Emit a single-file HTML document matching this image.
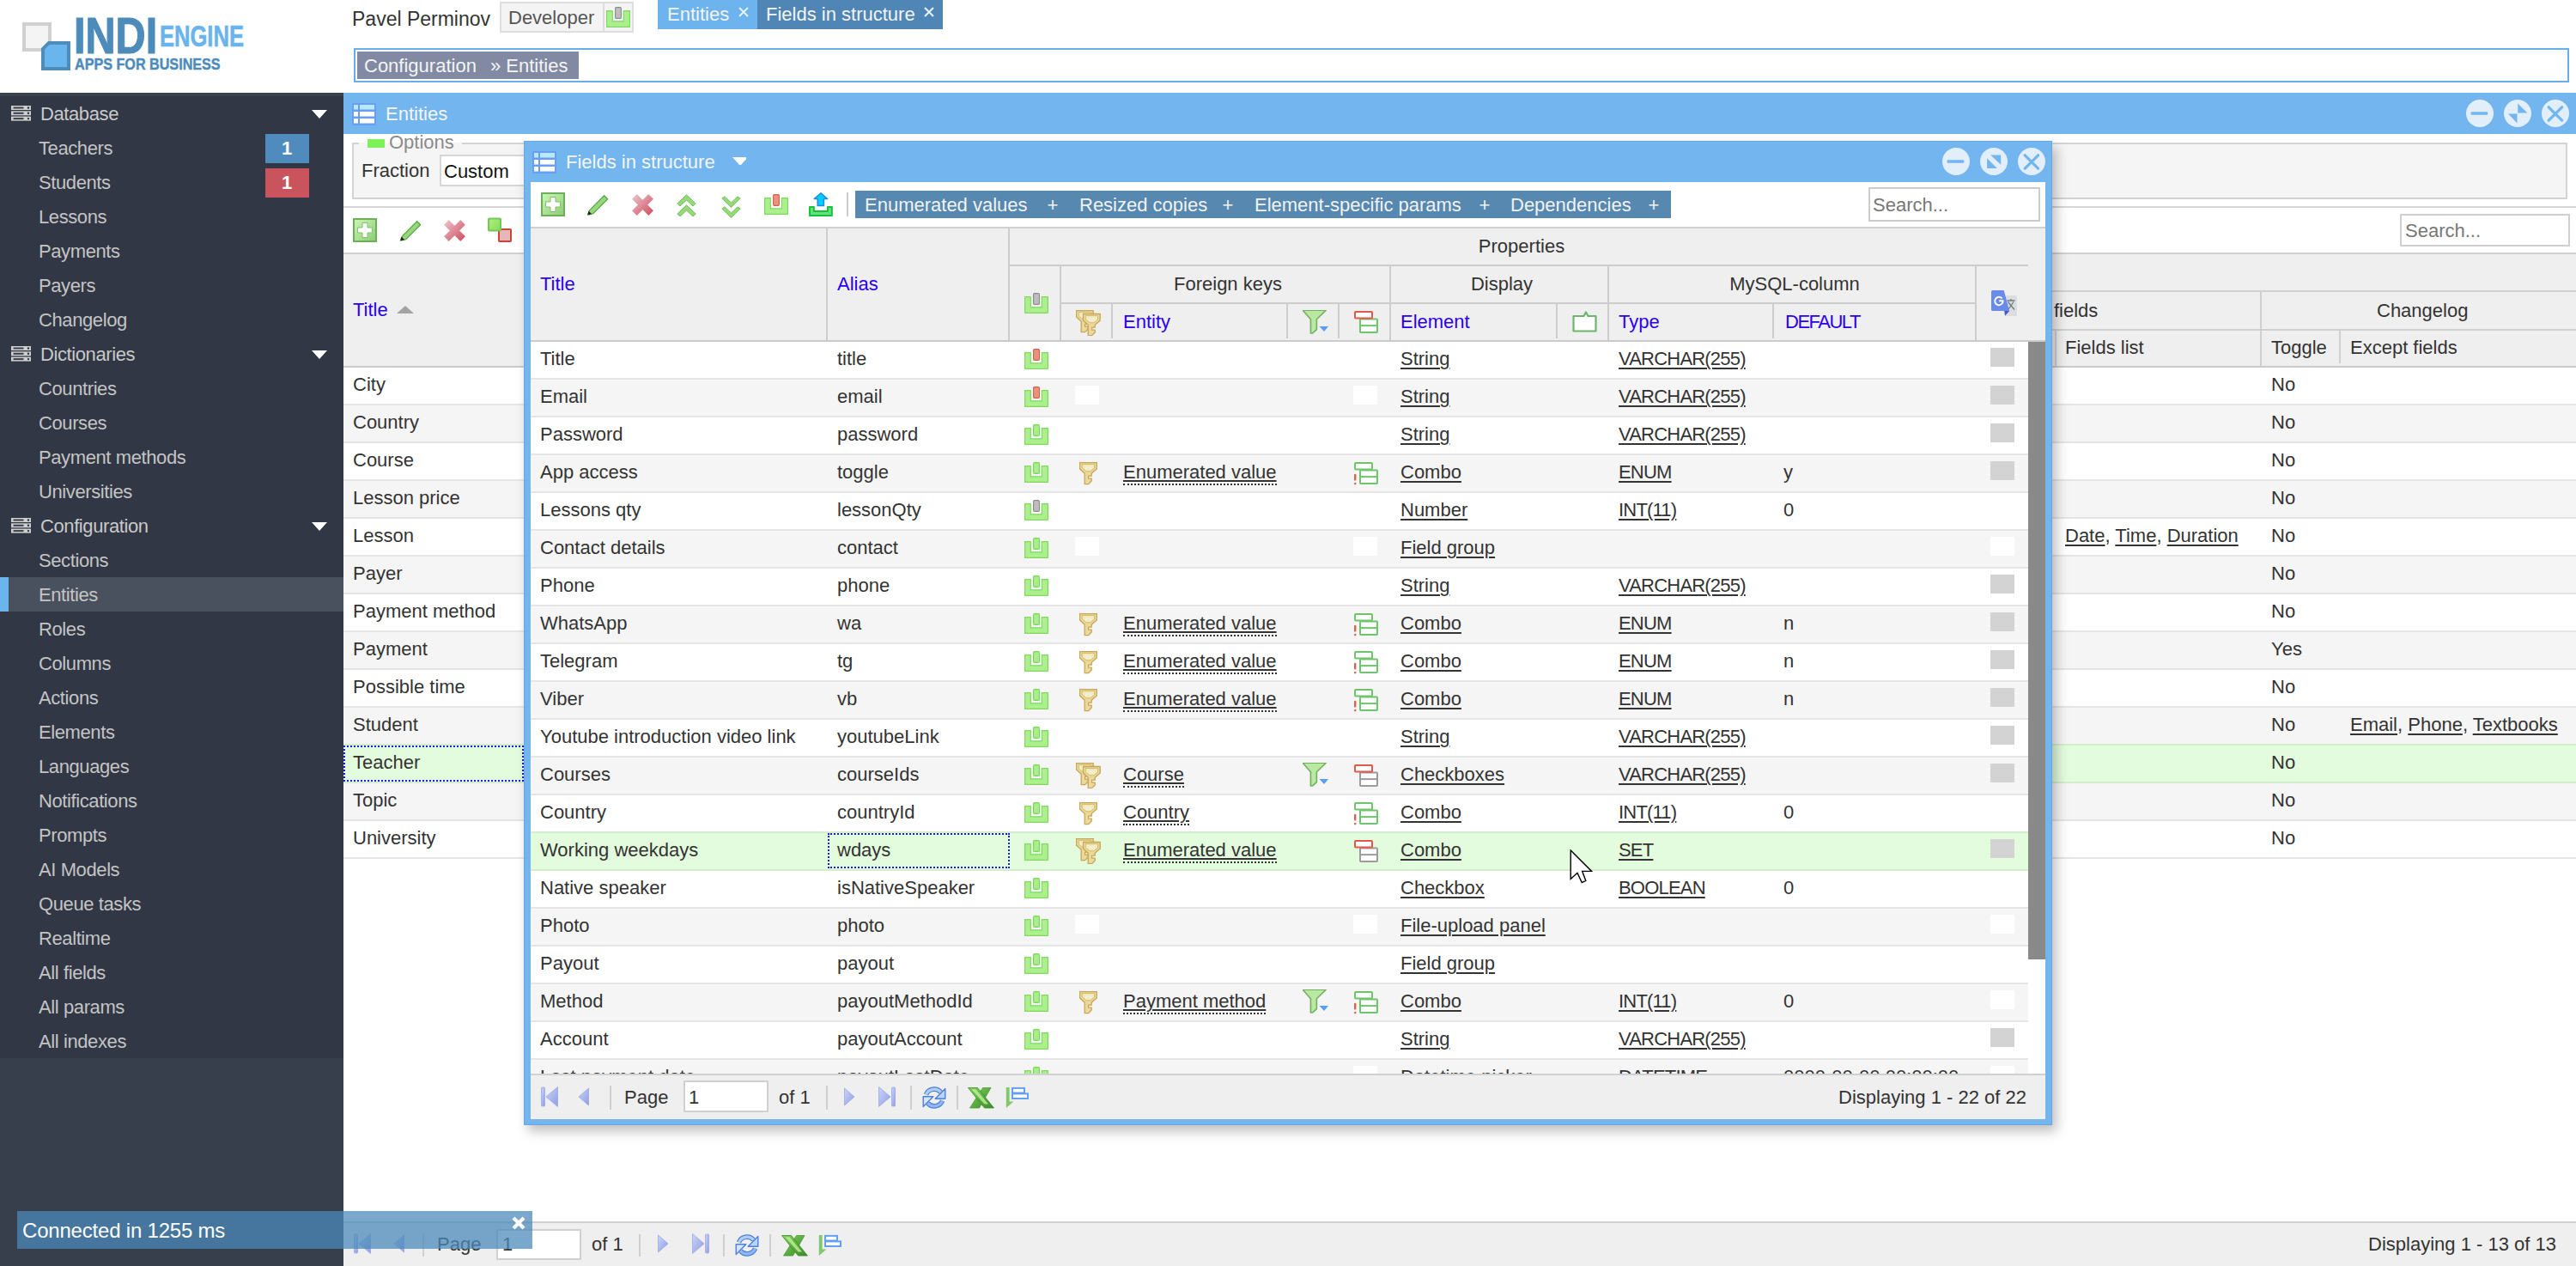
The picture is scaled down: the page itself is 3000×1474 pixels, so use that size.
<!DOCTYPE html><html><head><meta charset="utf-8"><style>
html,body{margin:0;padding:0;width:3000px;height:1474px;overflow:hidden;background:#fff;font-family:'Liberation Sans', sans-serif;}
div{box-sizing:border-box}
u{text-decoration:underline;text-underline-offset:3px;text-decoration-thickness:2px}
</style></head><body>
<div style="position:absolute;left:26px;top:26px;width:34px;height:34px;background:#F4F4F4;border:4px solid #D0D0D0"></div><svg style="position:absolute;left:48px;top:48px" width="34" height="34" viewBox="0 0 34 34"><path d="M8 0 H34 V34 H0 V8 Z" fill="#4E8CBA"/><path d="M9.5 4 H30 V30 H4 V9.5 Z" fill="#69B5EE"/></svg><div style="position:absolute;left:86px;top:12px;font-weight:bold;font-size:60px;line-height:60px;color:#4D8BBB;-webkit-text-stroke:1.2px #4D8BBB;transform-origin:0 0;transform:scaleX(0.81)">INDI</div><div style="position:absolute;left:186px;top:24px;font-weight:bold;font-size:35px;line-height:35px;color:#69B4EC;-webkit-text-stroke:0.6px #69B4EC;transform-origin:0 0;transform:scaleX(0.73)">ENGINE</div><div style="position:absolute;left:87px;top:65px;font-weight:bold;font-size:19px;line-height:19px;color:#4D8BBB;-webkit-text-stroke:0.4px #4D8BBB;transform-origin:0 0;transform:scaleX(0.85)">APPS FOR BUSINESS</div><div style="position:absolute;left:410px;top:11px;font-size:23px;line-height:23px;color:#333;white-space:nowrap;">Pavel Perminov</div><div style="position:absolute;left:582px;top:2px;width:156px;height:36px;background:#F4F4F4;border:2px solid #DDDDDD"></div><div style="position:absolute;left:702px;top:2px;width:2px;height:36px;background:#DDDDDD"></div><div style="position:absolute;left:592px;top:10px;font-size:22px;line-height:22px;color:#555;white-space:nowrap;">Developer</div><svg style="position:absolute;left:706px;top:8px" width="28" height="24" viewBox="0 0 28 24"><path d="M0.6 4.6 H7.3 V16.8 H20.3 V4.6 H27.4 V23.3 H0.6 Z" fill="#ACEF8E" stroke="#80DA62" stroke-width="1.2" stroke-linejoin="round"/><rect x="10.6" y="0.6" width="6.8" height="12.8" rx="1.2" fill="#BEBEBE" stroke="#8C8C8C" stroke-width="1.1"/></svg><div style="position:absolute;left:766px;top:0px;width:116px;height:34px;background:#6DB3ED"></div><div style="position:absolute;left:777px;top:6px;font-size:22px;line-height:22px;color:#F4F4F4;white-space:nowrap;">Entities</div><svg style="position:absolute;left:860px;top:8px" width="12" height="12" viewBox="0 0 12 12"><path d="M1 1 L11 11 M11 1 L1 11" stroke="#E8F2FB" stroke-width="2"/></svg><div style="position:absolute;left:882px;top:0px;width:216px;height:34px;background:#4F86B5"></div><div style="position:absolute;left:892px;top:6px;font-size:22px;line-height:22px;color:#F4F4F4;white-space:nowrap;">Fields in structure</div><svg style="position:absolute;left:1076px;top:8px" width="12" height="12" viewBox="0 0 12 12"><path d="M1 1 L11 11 M11 1 L1 11" stroke="#E8F2FB" stroke-width="2"/></svg><div style="position:absolute;left:412px;top:56px;width:2580px;height:40px;border:2px solid #66AEEC;background:#fff"></div><div style="position:absolute;left:416px;top:60px;width:258px;height:32px;background:#818AA2"></div><div style="position:absolute;left:424px;top:66px;font-size:22px;line-height:22px;color:#F4F4F4;white-space:nowrap;">Configuration</div><div style="position:absolute;left:571px;top:66px;font-size:22px;line-height:22px;color:#F4F4F4;white-space:nowrap;">» Entities</div><div style="position:absolute;left:0px;top:108px;width:400px;height:1366px;background:#363F4B"></div><div style="position:absolute;left:0px;top:108px;width:400px;height:1124px;background:#313744"></div><div style="position:absolute;left:0px;top:108px;width:400px;height:4px;background:#39414D"></div><svg style="position:absolute;left:13px;top:123px" width="23" height="18" viewBox="0 0 23 18"><rect x="0" y="0" width="23" height="5" fill="#CFCFCF"/><rect x="2.5" y="1.5" width="12" height="2" fill="#3A404A"/><circle cx="20" cy="2.5" r="1.2" fill="#2A3040"/><rect x="0" y="6.3" width="23" height="5" fill="#CFCFCF"/><rect x="2.5" y="7.8" width="12" height="2" fill="#3A404A"/><circle cx="20" cy="8.8" r="1.2" fill="#2A3040"/><rect x="0" y="12.6" width="23" height="5" fill="#CFCFCF"/><rect x="2.5" y="14.1" width="12" height="2" fill="#3A404A"/><circle cx="20" cy="15.1" r="1.2" fill="#2A3040"/></svg><div style="position:absolute;left:47px;top:122px;font-size:22px;line-height:22px;color:#C9C9C9;white-space:nowrap;letter-spacing:-0.4px">Database</div><svg style="position:absolute;left:363px;top:128px" width="18" height="10" viewBox="0 0 18 10"><path d="M0 0 H18 L9 10 Z" fill="#fff"/></svg><div style="position:absolute;left:45px;top:162px;font-size:22px;line-height:22px;color:#C4C4C4;white-space:nowrap;letter-spacing:-0.4px">Teachers</div><div style="position:absolute;left:45px;top:202px;font-size:22px;line-height:22px;color:#C4C4C4;white-space:nowrap;letter-spacing:-0.4px">Students</div><div style="position:absolute;left:45px;top:242px;font-size:22px;line-height:22px;color:#C4C4C4;white-space:nowrap;letter-spacing:-0.4px">Lessons</div><div style="position:absolute;left:45px;top:282px;font-size:22px;line-height:22px;color:#C4C4C4;white-space:nowrap;letter-spacing:-0.4px">Payments</div><div style="position:absolute;left:45px;top:322px;font-size:22px;line-height:22px;color:#C4C4C4;white-space:nowrap;letter-spacing:-0.4px">Payers</div><div style="position:absolute;left:45px;top:362px;font-size:22px;line-height:22px;color:#C4C4C4;white-space:nowrap;letter-spacing:-0.4px">Changelog</div><svg style="position:absolute;left:13px;top:403px" width="23" height="18" viewBox="0 0 23 18"><rect x="0" y="0" width="23" height="5" fill="#CFCFCF"/><rect x="2.5" y="1.5" width="12" height="2" fill="#3A404A"/><circle cx="20" cy="2.5" r="1.2" fill="#2A3040"/><rect x="0" y="6.3" width="23" height="5" fill="#CFCFCF"/><rect x="2.5" y="7.8" width="12" height="2" fill="#3A404A"/><circle cx="20" cy="8.8" r="1.2" fill="#2A3040"/><rect x="0" y="12.6" width="23" height="5" fill="#CFCFCF"/><rect x="2.5" y="14.1" width="12" height="2" fill="#3A404A"/><circle cx="20" cy="15.1" r="1.2" fill="#2A3040"/></svg><div style="position:absolute;left:47px;top:402px;font-size:22px;line-height:22px;color:#C9C9C9;white-space:nowrap;letter-spacing:-0.4px">Dictionaries</div><svg style="position:absolute;left:363px;top:408px" width="18" height="10" viewBox="0 0 18 10"><path d="M0 0 H18 L9 10 Z" fill="#fff"/></svg><div style="position:absolute;left:45px;top:442px;font-size:22px;line-height:22px;color:#C4C4C4;white-space:nowrap;letter-spacing:-0.4px">Countries</div><div style="position:absolute;left:45px;top:482px;font-size:22px;line-height:22px;color:#C4C4C4;white-space:nowrap;letter-spacing:-0.4px">Courses</div><div style="position:absolute;left:45px;top:522px;font-size:22px;line-height:22px;color:#C4C4C4;white-space:nowrap;letter-spacing:-0.4px">Payment methods</div><div style="position:absolute;left:45px;top:562px;font-size:22px;line-height:22px;color:#C4C4C4;white-space:nowrap;letter-spacing:-0.4px">Universities</div><svg style="position:absolute;left:13px;top:603px" width="23" height="18" viewBox="0 0 23 18"><rect x="0" y="0" width="23" height="5" fill="#CFCFCF"/><rect x="2.5" y="1.5" width="12" height="2" fill="#3A404A"/><circle cx="20" cy="2.5" r="1.2" fill="#2A3040"/><rect x="0" y="6.3" width="23" height="5" fill="#CFCFCF"/><rect x="2.5" y="7.8" width="12" height="2" fill="#3A404A"/><circle cx="20" cy="8.8" r="1.2" fill="#2A3040"/><rect x="0" y="12.6" width="23" height="5" fill="#CFCFCF"/><rect x="2.5" y="14.1" width="12" height="2" fill="#3A404A"/><circle cx="20" cy="15.1" r="1.2" fill="#2A3040"/></svg><div style="position:absolute;left:47px;top:602px;font-size:22px;line-height:22px;color:#C9C9C9;white-space:nowrap;letter-spacing:-0.4px">Configuration</div><svg style="position:absolute;left:363px;top:608px" width="18" height="10" viewBox="0 0 18 10"><path d="M0 0 H18 L9 10 Z" fill="#fff"/></svg><div style="position:absolute;left:45px;top:642px;font-size:22px;line-height:22px;color:#C4C4C4;white-space:nowrap;letter-spacing:-0.4px">Sections</div><div style="position:absolute;left:0px;top:672px;width:400px;height:40px;background:#4A515E"></div><div style="position:absolute;left:0px;top:672px;width:10px;height:40px;background:#6CB4EE"></div><div style="position:absolute;left:45px;top:682px;font-size:22px;line-height:22px;color:#C4C4C4;white-space:nowrap;letter-spacing:-0.4px">Entities</div><div style="position:absolute;left:45px;top:722px;font-size:22px;line-height:22px;color:#C4C4C4;white-space:nowrap;letter-spacing:-0.4px">Roles</div><div style="position:absolute;left:45px;top:762px;font-size:22px;line-height:22px;color:#C4C4C4;white-space:nowrap;letter-spacing:-0.4px">Columns</div><div style="position:absolute;left:45px;top:802px;font-size:22px;line-height:22px;color:#C4C4C4;white-space:nowrap;letter-spacing:-0.4px">Actions</div><div style="position:absolute;left:45px;top:842px;font-size:22px;line-height:22px;color:#C4C4C4;white-space:nowrap;letter-spacing:-0.4px">Elements</div><div style="position:absolute;left:45px;top:882px;font-size:22px;line-height:22px;color:#C4C4C4;white-space:nowrap;letter-spacing:-0.4px">Languages</div><div style="position:absolute;left:45px;top:922px;font-size:22px;line-height:22px;color:#C4C4C4;white-space:nowrap;letter-spacing:-0.4px">Notifications</div><div style="position:absolute;left:45px;top:962px;font-size:22px;line-height:22px;color:#C4C4C4;white-space:nowrap;letter-spacing:-0.4px">Prompts</div><div style="position:absolute;left:45px;top:1002px;font-size:22px;line-height:22px;color:#C4C4C4;white-space:nowrap;letter-spacing:-0.4px">AI Models</div><div style="position:absolute;left:45px;top:1042px;font-size:22px;line-height:22px;color:#C4C4C4;white-space:nowrap;letter-spacing:-0.4px">Queue tasks</div><div style="position:absolute;left:45px;top:1082px;font-size:22px;line-height:22px;color:#C4C4C4;white-space:nowrap;letter-spacing:-0.4px">Realtime</div><div style="position:absolute;left:45px;top:1122px;font-size:22px;line-height:22px;color:#C4C4C4;white-space:nowrap;letter-spacing:-0.4px">All fields</div><div style="position:absolute;left:45px;top:1162px;font-size:22px;line-height:22px;color:#C4C4C4;white-space:nowrap;letter-spacing:-0.4px">All params</div><div style="position:absolute;left:45px;top:1202px;font-size:22px;line-height:22px;color:#C4C4C4;white-space:nowrap;letter-spacing:-0.4px">All indexes</div><div style="position:absolute;left:309px;top:156px;width:51px;height:34px;background:#4F8BBD"></div><div style="position:absolute;left:328px;top:162px;font-size:22px;line-height:22px;color:#fff;white-space:nowrap;font-weight:bold">1</div><div style="position:absolute;left:309px;top:196px;width:51px;height:34px;background:#C9545E"></div><div style="position:absolute;left:328px;top:202px;font-size:22px;line-height:22px;color:#fff;white-space:nowrap;font-weight:bold">1</div><div style="position:absolute;left:400px;top:108px;width:2600px;height:48px;background:#72B5EF"></div><svg style="position:absolute;left:410px;top:120px" width="28" height="26" viewBox="0 0 28 26"><rect x="0" y="0" width="28" height="26" rx="1.5" fill="#6A9DF4"/><rect x="2" y="2" width="5" height="5.5" fill="#B6EAFB"/><rect x="9" y="2" width="17" height="5.5" fill="#B6EAFB"/><rect x="2" y="10" width="5" height="5.5" fill="#fff"/><rect x="9" y="10" width="17" height="5.5" fill="#fff"/><rect x="2" y="18" width="5" height="5.5" fill="#fff"/><rect x="9" y="18" width="17" height="5.5" fill="#fff"/></svg><div style="position:absolute;left:449px;top:122px;font-size:22px;line-height:22px;color:#F5F5F5;white-space:nowrap;">Entities</div><svg style="position:absolute;left:2872px;top:116px" width="32" height="32" viewBox="0 0 32 32"><circle cx="16" cy="16" r="16" fill="#E2EFFB"/><rect x="5.6" y="14.2" width="19.6" height="3.6" rx="1" fill="#72B5EF"/></svg><svg style="position:absolute;left:2916px;top:116px" width="32" height="32" viewBox="0 0 32 32"><circle cx="16" cy="16" r="16" fill="#E2EFFB"/><path d="M16.3 4.6 V15.5 H27.4 Z M5.1 16.5 H15.5 V27.4 Z" fill="#72B5EF"/></svg><svg style="position:absolute;left:2960px;top:116px" width="32" height="32" viewBox="0 0 32 32"><circle cx="16" cy="16" r="16" fill="#E2EFFB"/><path d="M8.2 8.8 L23.6 24.1 M23.6 8.8 L8.2 24.1" stroke="#72B5EF" stroke-width="3.3" stroke-linecap="round"/></svg><div style="position:absolute;left:410px;top:166px;width:2580px;height:66px;background:#F5F5F5;border:2px solid #D3D3D3"></div><div style="position:absolute;left:418px;top:166px;width:120px;height:2px;background:#F5F5F5"></div><div style="position:absolute;left:428px;top:162px;width:20px;height:10px;background:#7EF15A"></div><div style="position:absolute;left:453px;top:155px;font-size:22px;line-height:22px;color:#8A8A8A;white-space:nowrap;">Options</div><div style="position:absolute;left:421px;top:188px;font-size:22px;line-height:22px;color:#333;white-space:nowrap;">Fraction</div><div style="position:absolute;left:512px;top:180px;width:200px;height:37px;background:#fff;border:2px solid #D6D6D6"></div><div style="position:absolute;left:517px;top:189px;font-size:22px;line-height:22px;color:#111;white-space:nowrap;">Custom</div><div style="position:absolute;left:400px;top:240px;width:2600px;height:2px;background:#D6D6D6"></div><svg style="position:absolute;left:411px;top:254px" width="28" height="28" viewBox="0 0 28 28"><defs><linearGradient id="gadd" x1="0" y1="0" x2="1" y2="1"><stop offset="0" stop-color="#CDF7B8"/><stop offset="1" stop-color="#8CCB74"/></linearGradient></defs><rect x="1" y="1" width="26" height="26" fill="url(#gadd)" stroke="#6CAF58" stroke-width="2"/><path d="M11 5.5 H17 V11 H22.5 V17 H17 V22.5 H11 V17 H5.5 V11 H11 Z" fill="#fff" stroke="#82C06C" stroke-width="1"/></svg><svg style="position:absolute;left:465px;top:255px" width="26" height="26" viewBox="0 0 26 26"><path d="M3.8 19.6 L20.6 2.8 L24.6 6.8 L7.8 23.6 L1.6 25 Z" fill="#93D97A" stroke="#5FA54A" stroke-width="1.3" stroke-linejoin="round"/><path d="M1.3 25.3 L2.4 20.6 L6.2 24.3 Z" fill="#222"/></svg><svg style="position:absolute;left:517px;top:256px" width="25" height="25" viewBox="0 0 25 25"><defs><linearGradient id="gdel" gradientUnits="userSpaceOnUse" x1="0" y1="0" x2="25" y2="25"><stop offset="0" stop-color="#EDC8CF"/><stop offset="1" stop-color="#CC4A5C"/></linearGradient></defs><path d="M2.9 2.9 L22.1 22.1 M22.1 2.9 L2.9 22.1" stroke="url(#gdel)" stroke-width="8" stroke-linecap="butt"/></svg><svg style="position:absolute;left:567px;top:252px" width="30" height="30" viewBox="0 0 30 30"><rect x="14" y="15" width="14" height="14" rx="0.8" fill="#E6B6B9" stroke="#CC4434" stroke-width="2"/><defs><linearGradient id="gcp" x1="0" y1="0" x2="1" y2="1"><stop offset="0" stop-color="#ADF07F"/><stop offset="1" stop-color="#88DC58"/></linearGradient></defs><rect x="2" y="2.5" width="14" height="14" rx="0.8" fill="url(#gcp)" stroke="#7AC35C" stroke-width="2"/></svg><div style="position:absolute;left:2795px;top:249px;width:198px;height:38px;background:#fff;border:2px solid #CFCFCF"></div><div style="position:absolute;left:2801px;top:258px;font-size:22px;line-height:22px;color:#777;white-space:nowrap;">Search...</div><div style="position:absolute;left:400px;top:294px;width:2600px;height:2px;background:#D0D0D0"></div><div style="position:absolute;left:400px;top:296px;width:2600px;height:130px;background:#EFEFEF"></div><div style="position:absolute;left:400px;top:426px;width:2600px;height:2px;background:#CBCBCB"></div><div style="position:absolute;left:411px;top:350px;font-size:22px;line-height:22px;color:#2B00F0;white-space:nowrap;">Title</div><svg style="position:absolute;left:462px;top:356px" width="20" height="9" viewBox="0 0 20 9"><path d="M0 9 L10 0 L20 9 Z" fill="#A3A3A3"/></svg><div style="position:absolute;left:2390px;top:338px;width:610px;height:2px;background:#D0D0D0"></div><div style="position:absolute;left:2390px;top:383px;width:610px;height:2px;background:#D0D0D0"></div><div style="position:absolute;left:2632px;top:339px;width:2px;height:88px;background:#D0D0D0"></div><div style="position:absolute;left:2393px;top:384px;width:2px;height:42px;background:#D0D0D0"></div><div style="position:absolute;left:2724px;top:385px;width:2px;height:38px;background:#D0D0D0"></div><div style="position:absolute;left:2392px;top:351px;font-size:22px;line-height:22px;color:#333;white-space:nowrap;">fields</div><div style="position:absolute;left:2768px;top:351px;font-size:22px;line-height:22px;color:#333;white-space:nowrap;">Changelog</div><div style="position:absolute;left:2405px;top:394px;font-size:22px;line-height:22px;color:#333;white-space:nowrap;">Fields list</div><div style="position:absolute;left:2645px;top:394px;font-size:22px;line-height:22px;color:#333;white-space:nowrap;">Toggle</div><div style="position:absolute;left:2737px;top:394px;font-size:22px;line-height:22px;color:#333;white-space:nowrap;">Except fields</div><div style="position:absolute;left:400px;top:428px;width:2600px;height:42px;background:#fff"></div><div style="position:absolute;left:400px;top:470px;width:2600px;height:2px;background:#E5E5E5"></div><div style="position:absolute;left:411px;top:437px;font-size:22px;line-height:22px;color:#333;white-space:nowrap;">City</div><div style="position:absolute;left:2645px;top:437px;font-size:22px;line-height:22px;color:#333;white-space:nowrap;">No</div><div style="position:absolute;left:400px;top:472px;width:2600px;height:42px;background:#F5F5F5"></div><div style="position:absolute;left:400px;top:514px;width:2600px;height:2px;background:#E5E5E5"></div><div style="position:absolute;left:411px;top:481px;font-size:22px;line-height:22px;color:#333;white-space:nowrap;">Country</div><div style="position:absolute;left:2645px;top:481px;font-size:22px;line-height:22px;color:#333;white-space:nowrap;">No</div><div style="position:absolute;left:400px;top:516px;width:2600px;height:42px;background:#fff"></div><div style="position:absolute;left:400px;top:558px;width:2600px;height:2px;background:#E5E5E5"></div><div style="position:absolute;left:411px;top:525px;font-size:22px;line-height:22px;color:#333;white-space:nowrap;">Course</div><div style="position:absolute;left:2645px;top:525px;font-size:22px;line-height:22px;color:#333;white-space:nowrap;">No</div><div style="position:absolute;left:400px;top:560px;width:2600px;height:42px;background:#F5F5F5"></div><div style="position:absolute;left:400px;top:602px;width:2600px;height:2px;background:#E5E5E5"></div><div style="position:absolute;left:411px;top:569px;font-size:22px;line-height:22px;color:#333;white-space:nowrap;">Lesson price</div><div style="position:absolute;left:2645px;top:569px;font-size:22px;line-height:22px;color:#333;white-space:nowrap;">No</div><div style="position:absolute;left:400px;top:604px;width:2600px;height:42px;background:#fff"></div><div style="position:absolute;left:400px;top:646px;width:2600px;height:2px;background:#E5E5E5"></div><div style="position:absolute;left:411px;top:613px;font-size:22px;line-height:22px;color:#333;white-space:nowrap;">Lesson</div><div style="position:absolute;left:2645px;top:613px;font-size:22px;line-height:22px;color:#333;white-space:nowrap;">No</div><div style="position:absolute;left:2405px;top:613px;font-size:22px;line-height:22px;color:#333;white-space:nowrap;"><u>Date</u>, <u>Time</u>, <u>Duration</u></div><div style="position:absolute;left:400px;top:648px;width:2600px;height:42px;background:#F5F5F5"></div><div style="position:absolute;left:400px;top:690px;width:2600px;height:2px;background:#E5E5E5"></div><div style="position:absolute;left:411px;top:657px;font-size:22px;line-height:22px;color:#333;white-space:nowrap;">Payer</div><div style="position:absolute;left:2645px;top:657px;font-size:22px;line-height:22px;color:#333;white-space:nowrap;">No</div><div style="position:absolute;left:400px;top:692px;width:2600px;height:42px;background:#fff"></div><div style="position:absolute;left:400px;top:734px;width:2600px;height:2px;background:#E5E5E5"></div><div style="position:absolute;left:411px;top:701px;font-size:22px;line-height:22px;color:#333;white-space:nowrap;">Payment method</div><div style="position:absolute;left:2645px;top:701px;font-size:22px;line-height:22px;color:#333;white-space:nowrap;">No</div><div style="position:absolute;left:400px;top:736px;width:2600px;height:42px;background:#F5F5F5"></div><div style="position:absolute;left:400px;top:778px;width:2600px;height:2px;background:#E5E5E5"></div><div style="position:absolute;left:411px;top:745px;font-size:22px;line-height:22px;color:#333;white-space:nowrap;">Payment</div><div style="position:absolute;left:2645px;top:745px;font-size:22px;line-height:22px;color:#333;white-space:nowrap;">Yes</div><div style="position:absolute;left:400px;top:780px;width:2600px;height:42px;background:#fff"></div><div style="position:absolute;left:400px;top:822px;width:2600px;height:2px;background:#E5E5E5"></div><div style="position:absolute;left:411px;top:789px;font-size:22px;line-height:22px;color:#333;white-space:nowrap;">Possible time</div><div style="position:absolute;left:2645px;top:789px;font-size:22px;line-height:22px;color:#333;white-space:nowrap;">No</div><div style="position:absolute;left:400px;top:824px;width:2600px;height:42px;background:#F5F5F5"></div><div style="position:absolute;left:400px;top:866px;width:2600px;height:2px;background:#D4EDCD"></div><div style="position:absolute;left:411px;top:833px;font-size:22px;line-height:22px;color:#333;white-space:nowrap;">Student</div><div style="position:absolute;left:2645px;top:833px;font-size:22px;line-height:22px;color:#333;white-space:nowrap;">No</div><div style="position:absolute;left:2737px;top:833px;font-size:22px;line-height:22px;color:#333;white-space:nowrap;"><u>Email</u>, <u>Phone</u>, <u>Textbooks</u></div><div style="position:absolute;left:400px;top:868px;width:2600px;height:42px;background:#E3FCDD"></div><div style="position:absolute;left:400px;top:910px;width:2600px;height:2px;background:#D4EDCD"></div><div style="position:absolute;left:411px;top:877px;font-size:22px;line-height:22px;color:#333;white-space:nowrap;">Teacher</div><div style="position:absolute;left:2645px;top:877px;font-size:22px;line-height:22px;color:#333;white-space:nowrap;">No</div><div style="position:absolute;left:400px;top:868px;width:210px;height:42px;border:2px dotted #1A1AE0"></div><div style="position:absolute;left:400px;top:912px;width:2600px;height:42px;background:#F5F5F5"></div><div style="position:absolute;left:400px;top:954px;width:2600px;height:2px;background:#E5E5E5"></div><div style="position:absolute;left:411px;top:921px;font-size:22px;line-height:22px;color:#333;white-space:nowrap;">Topic</div><div style="position:absolute;left:2645px;top:921px;font-size:22px;line-height:22px;color:#333;white-space:nowrap;">No</div><div style="position:absolute;left:400px;top:956px;width:2600px;height:42px;background:#fff"></div><div style="position:absolute;left:400px;top:998px;width:2600px;height:2px;background:#E5E5E5"></div><div style="position:absolute;left:411px;top:965px;font-size:22px;line-height:22px;color:#333;white-space:nowrap;">University</div><div style="position:absolute;left:2645px;top:965px;font-size:22px;line-height:22px;color:#333;white-space:nowrap;">No</div><div style="position:absolute;left:400px;top:1422px;width:2600px;height:52px;background:#EFEFEF;border-top:2px solid #D0D0D0"></div><svg style="position:absolute;left:412px;top:1436px" width="20" height="24" viewBox="0 0 20 24"><defs><linearGradient id="gpg" x1="0" y1="0" x2="1" y2="1"><stop offset="0" stop-color="#CCD5F7"/><stop offset="1" stop-color="#8D9CE6"/></linearGradient></defs><rect x="0.5" y="1" width="4" height="22" rx="1" fill="url(#gpg)" stroke="#9AA8E6" stroke-width="0.8"/><path d="M19.5 0.5 V23.5 L6 12 Z" fill="url(#gpg)" stroke="#9AA8E6" stroke-width="0.8"/></svg><svg style="position:absolute;left:458px;top:1436px" width="13" height="24" viewBox="0 0 13 24"><defs><linearGradient id="gpg" x1="0" y1="0" x2="1" y2="1"><stop offset="0" stop-color="#CCD5F7"/><stop offset="1" stop-color="#8D9CE6"/></linearGradient></defs><path d="M12.5 2 V22 L1 12 Z" fill="url(#gpg)" stroke="#9AA8E6" stroke-width="0.8"/></svg><div style="position:absolute;left:492px;top:1437px;width:2px;height:26px;background:#CFCFCF"></div><div style="position:absolute;left:509px;top:1438px;font-size:22px;line-height:22px;color:#333;white-space:nowrap;">Page</div><div style="position:absolute;left:578px;top:1431px;width:99px;height:36px;background:#fff;border:2px solid #D0D0D0"></div><div style="position:absolute;left:585px;top:1438px;font-size:22px;line-height:22px;color:#333;white-space:nowrap;">1</div><div style="position:absolute;left:689px;top:1438px;font-size:22px;line-height:22px;color:#333;white-space:nowrap;">of 1</div><div style="position:absolute;left:744px;top:1437px;width:2px;height:26px;background:#CFCFCF"></div><svg style="position:absolute;left:766px;top:1436px" width="13" height="24" viewBox="0 0 13 24"><defs><linearGradient id="gpg" x1="0" y1="0" x2="1" y2="1"><stop offset="0" stop-color="#CCD5F7"/><stop offset="1" stop-color="#8D9CE6"/></linearGradient></defs><path d="M0.5 2 V22 L12 12 Z" fill="url(#gpg)" stroke="#9AA8E6" stroke-width="0.8"/></svg><svg style="position:absolute;left:806px;top:1436px" width="20" height="24" viewBox="0 0 20 24"><defs><linearGradient id="gpg" x1="0" y1="0" x2="1" y2="1"><stop offset="0" stop-color="#CCD5F7"/><stop offset="1" stop-color="#8D9CE6"/></linearGradient></defs><path d="M0.5 0.5 V23.5 L14 12 Z" fill="url(#gpg)" stroke="#9AA8E6" stroke-width="0.8"/><rect x="15.5" y="1" width="4" height="22" rx="1" fill="url(#gpg)" stroke="#9AA8E6" stroke-width="0.8"/></svg><div style="position:absolute;left:842px;top:1437px;width:2px;height:26px;background:#CFCFCF"></div><svg style="position:absolute;left:856px;top:1436px" width="29" height="29" viewBox="0 0 29 29"><path d="M4.5 10.5 A10 9.5 0 0 1 21.5 7.5" fill="none" stroke="#4E80DA" stroke-width="5.6"/><path d="M4.5 10.5 A10 9.5 0 0 1 21.5 7.5" fill="none" stroke="#AFCFF7" stroke-width="3.2"/><path d="M26.8 3.6 V15.3 H15.2 Z" fill="#B7D5F8" stroke="#4E80DA" stroke-width="1.4" stroke-linejoin="round"/><path d="M23.5 17.5 A10 9.5 0 0 1 6.5 20.5" fill="none" stroke="#4E80DA" stroke-width="5.6"/><path d="M23.5 17.5 A10 9.5 0 0 1 6.5 20.5" fill="none" stroke="#8FB8F5" stroke-width="3.2"/><path d="M1.2 12.7 H12.8 L1.2 24.4 Z" fill="#D3E5FB" stroke="#4E80DA" stroke-width="1.4" stroke-linejoin="round"/></svg><div style="position:absolute;left:896px;top:1437px;width:2px;height:26px;background:#CFCFCF"></div><svg style="position:absolute;left:910px;top:1438px" width="31" height="25" viewBox="0 0 31 25"><defs><linearGradient id="gxl" x1="0" y1="0" x2="1" y2="1"><stop offset="0" stop-color="#7CD45A"/><stop offset="1" stop-color="#3C8A28"/></linearGradient></defs><path d="M17.5 0.5 H27 L13.5 24 H2.5 Z" fill="url(#gxl)" stroke="#4A9A34" stroke-width="0.8"/><path d="M0.5 0.5 H11.5 L30.5 24 H19.5 Z" fill="url(#gxl)" stroke="#3E8A2C" stroke-width="0.8"/><path d="M4.5 2.2 H9.5 L24 19.5 H19.5 Z" fill="#C6F49E" opacity="0.75"/></svg><svg style="position:absolute;left:953px;top:1437px" width="28" height="26" viewBox="0 0 28 26"><path d="M0.8 1 H4.6 V17.5 H9.5 L0.8 25 Z" fill="#7FC96C"/><rect x="8" y="1.9" width="14" height="5.6" fill="#fff" stroke="#62A0F2" stroke-width="2"/><rect x="8" y="8.4" width="18" height="5.6" fill="#fff" stroke="#62A0F2" stroke-width="2"/></svg><div style="position:absolute;left:2177px;width:800px;text-align:right;top:1438px;font-size:22px;line-height:22px;color:#333;white-space:nowrap;">Displaying 1 - 13 of 13</div><div style="position:absolute;left:610px;top:164px;width:1780px;height:1146px;background:#72B5EF;border:1px solid #66A7E0;box-shadow:5px 7px 13px rgba(0,0,0,0.26)"></div><svg style="position:absolute;left:620px;top:176px" width="28" height="26" viewBox="0 0 28 26"><rect x="0" y="0" width="28" height="26" rx="1.5" fill="#6A9DF4"/><rect x="2" y="2" width="5" height="5.5" fill="#B6EAFB"/><rect x="9" y="2" width="17" height="5.5" fill="#B6EAFB"/><rect x="2" y="10" width="5" height="5.5" fill="#fff"/><rect x="9" y="10" width="17" height="5.5" fill="#fff"/><rect x="2" y="18" width="5" height="5.5" fill="#fff"/><rect x="9" y="18" width="17" height="5.5" fill="#fff"/></svg><div style="position:absolute;left:659px;top:178px;font-size:22px;line-height:22px;color:#F5F5F5;white-space:nowrap;">Fields in structure</div><svg style="position:absolute;left:853px;top:183px" width="16" height="9" viewBox="0 0 16 9"><path d="M0 0 H18 L9 10 Z" fill="#fff"/></svg><svg style="position:absolute;left:2262px;top:172px" width="32" height="32" viewBox="0 0 32 32"><circle cx="16" cy="16" r="16" fill="#E2EFFB"/><rect x="5.6" y="14.2" width="19.6" height="3.6" rx="1" fill="#72B5EF"/></svg><svg style="position:absolute;left:2306px;top:172px" width="32" height="32" viewBox="0 0 32 32"><circle cx="16" cy="16" r="16" fill="#E2EFFB"/><path d="M12.2 8.4 H24.2 V19.8 Z M8.1 12.2 V23.9 H19.8 Z" fill="#72B5EF"/></svg><svg style="position:absolute;left:2350px;top:172px" width="32" height="32" viewBox="0 0 32 32"><circle cx="16" cy="16" r="16" fill="#E2EFFB"/><path d="M8.2 8.8 L23.6 24.1 M23.6 8.8 L8.2 24.1" stroke="#72B5EF" stroke-width="3.3" stroke-linecap="round"/></svg><div style="position:absolute;left:618px;top:212px;width:1764px;height:1091px;background:#fff"></div><svg style="position:absolute;left:630px;top:224px" width="28" height="28" viewBox="0 0 28 28"><defs><linearGradient id="gadd" x1="0" y1="0" x2="1" y2="1"><stop offset="0" stop-color="#CDF7B8"/><stop offset="1" stop-color="#8CCB74"/></linearGradient></defs><rect x="1" y="1" width="26" height="26" fill="url(#gadd)" stroke="#6CAF58" stroke-width="2"/><path d="M11 5.5 H17 V11 H22.5 V17 H17 V22.5 H11 V17 H5.5 V11 H11 Z" fill="#fff" stroke="#82C06C" stroke-width="1"/></svg><svg style="position:absolute;left:683px;top:225px" width="26" height="26" viewBox="0 0 26 26"><path d="M3.8 19.6 L20.6 2.8 L24.6 6.8 L7.8 23.6 L1.6 25 Z" fill="#93D97A" stroke="#5FA54A" stroke-width="1.3" stroke-linejoin="round"/><path d="M1.3 25.3 L2.4 20.6 L6.2 24.3 Z" fill="#222"/></svg><svg style="position:absolute;left:736px;top:226px" width="25" height="25" viewBox="0 0 25 25"><defs><linearGradient id="gdel" gradientUnits="userSpaceOnUse" x1="0" y1="0" x2="25" y2="25"><stop offset="0" stop-color="#EDC8CF"/><stop offset="1" stop-color="#CC4A5C"/></linearGradient></defs><path d="M2.9 2.9 L22.1 22.1 M22.1 2.9 L2.9 22.1" stroke="url(#gdel)" stroke-width="8" stroke-linecap="butt"/></svg><svg style="position:absolute;left:788px;top:226px" width="23" height="27" viewBox="0 0 23 27"><path d="M0.8 11 L11.5 0.8 L22.2 11 L19 14 L11.5 7 L4 14 Z" fill="#93D97A" stroke="#77C15E" stroke-width="1"/><path d="M0.8 23 L11.5 12.8 L22.2 23 L19 26 L11.5 19 L4 26 Z" fill="#93D97A" stroke="#77C15E" stroke-width="1"/></svg><svg style="position:absolute;left:840px;top:228px" width="23" height="26" viewBox="0 0 23 26"><path d="M0.8 3 L4 0.8 L11.5 8 L19 0.8 L22.2 3 L11.5 13.5 Z" fill="#93D97A" stroke="#77C15E" stroke-width="1"/><path d="M0.8 15 L4 12.8 L11.5 20 L19 12.8 L22.2 15 L11.5 25.5 Z" fill="#93D97A" stroke="#77C15E" stroke-width="1"/></svg><svg style="position:absolute;left:890px;top:226px" width="28" height="24" viewBox="0 0 28 24"><path d="M0.6 4.6 H7.3 V16.8 H20.3 V4.6 H27.4 V23.3 H0.6 Z" fill="#ACEF8E" stroke="#80DA62" stroke-width="1.2" stroke-linejoin="round"/><rect x="10.6" y="0.6" width="6.8" height="12.8" rx="1.2" fill="#E9937F" stroke="#D0634E" stroke-width="1.1"/></svg><svg style="position:absolute;left:942px;top:224px" width="28" height="28" viewBox="0 0 28 28"><path d="M1 17 H5.8 V22.1 H21.9 V17 H26.8 V27 H1 Z" fill="#66E27A" stroke="#12C23A" stroke-width="2" stroke-linejoin="round"/><path d="M14 0.8 L21.6 7.6 H17.4 V15.4 H10.2 V7.6 H6.2 Z" fill="#00CCFF" stroke="#1890DC" stroke-width="1.5" stroke-linejoin="round"/></svg><div style="position:absolute;left:986px;top:224px;width:2px;height:28px;background:#CCCCCC"></div><div style="position:absolute;left:996px;top:222px;width:950px;height:32px;background:#5688B0"></div><div style="position:absolute;left:1007px;top:228px;font-size:22px;line-height:22px;color:#F2F2F2;white-space:nowrap;">Enumerated values</div><div style="position:absolute;left:1257px;top:228px;font-size:22px;line-height:22px;color:#F2F2F2;white-space:nowrap;">Resized copies</div><div style="position:absolute;left:1461px;top:228px;font-size:22px;line-height:22px;color:#F2F2F2;white-space:nowrap;">Element-specific params</div><div style="position:absolute;left:1759px;top:228px;font-size:22px;line-height:22px;color:#F2F2F2;white-space:nowrap;">Dependencies</div><div style="position:absolute;left:926px;width:600px;text-align:center;top:228px;font-size:22px;line-height:22px;color:#F2F2F2;white-space:nowrap;">+</div><div style="position:absolute;left:1130px;width:600px;text-align:center;top:228px;font-size:22px;line-height:22px;color:#F2F2F2;white-space:nowrap;">+</div><div style="position:absolute;left:1429px;width:600px;text-align:center;top:228px;font-size:22px;line-height:22px;color:#F2F2F2;white-space:nowrap;">+</div><div style="position:absolute;left:1626px;width:600px;text-align:center;top:228px;font-size:22px;line-height:22px;color:#F2F2F2;white-space:nowrap;">+</div><div style="position:absolute;left:2176px;top:218px;width:200px;height:40px;background:#fff;border:2px solid #CCCCCC"></div><div style="position:absolute;left:2181px;top:228px;font-size:22px;line-height:22px;color:#777;white-space:nowrap;">Search...</div><div style="position:absolute;left:618px;top:264px;width:1764px;height:2px;background:#D0D0D0"></div><div style="position:absolute;left:618px;top:266px;width:1764px;height:130px;background:#EFEFEF"></div><div style="position:absolute;left:618px;top:396px;width:1764px;height:2px;background:#CBCBCB"></div><div style="position:absolute;left:962px;top:266px;width:2px;height:131px;background:#CDCDCD"></div><div style="position:absolute;left:1174px;top:266px;width:2px;height:131px;background:#CDCDCD"></div><div style="position:absolute;left:1175px;top:308px;width:1187px;height:2px;background:#CDCDCD"></div><div style="position:absolute;left:1234px;top:309px;width:2px;height:88px;background:#CDCDCD"></div><div style="position:absolute;left:1618px;top:309px;width:2px;height:88px;background:#CDCDCD"></div><div style="position:absolute;left:1872px;top:309px;width:2px;height:88px;background:#CDCDCD"></div><div style="position:absolute;left:2300px;top:309px;width:2px;height:88px;background:#CDCDCD"></div><div style="position:absolute;left:1235px;top:352px;width:1066px;height:2px;background:#CDCDCD"></div><div style="position:absolute;left:1294px;top:354px;width:2px;height:40px;background:#CDCDCD"></div><div style="position:absolute;left:1498px;top:354px;width:2px;height:40px;background:#CDCDCD"></div><div style="position:absolute;left:1558px;top:354px;width:2px;height:40px;background:#CDCDCD"></div><div style="position:absolute;left:1812px;top:354px;width:2px;height:40px;background:#CDCDCD"></div><div style="position:absolute;left:2064px;top:354px;width:2px;height:40px;background:#CDCDCD"></div><div style="position:absolute;left:629px;top:320px;font-size:22px;line-height:22px;color:#2B00F0;white-space:nowrap;">Title</div><div style="position:absolute;left:975px;top:320px;font-size:22px;line-height:22px;color:#2B00F0;white-space:nowrap;">Alias</div><div style="position:absolute;left:1472px;width:600px;text-align:center;top:276px;font-size:22px;line-height:22px;color:#333;white-space:nowrap;">Properties</div><div style="position:absolute;left:1130px;width:600px;text-align:center;top:320px;font-size:22px;line-height:22px;color:#333;white-space:nowrap;">Foreign keys</div><div style="position:absolute;left:1449px;width:600px;text-align:center;top:320px;font-size:22px;line-height:22px;color:#333;white-space:nowrap;">Display</div><div style="position:absolute;left:1790px;width:600px;text-align:center;top:320px;font-size:22px;line-height:22px;color:#333;white-space:nowrap;">MySQL-column</div><div style="position:absolute;left:1308px;top:364px;font-size:22px;line-height:22px;color:#2B00F0;white-space:nowrap;">Entity</div><div style="position:absolute;left:1631px;top:364px;font-size:22px;line-height:22px;color:#2B00F0;white-space:nowrap;">Element</div><div style="position:absolute;left:1885px;top:364px;font-size:22px;line-height:22px;color:#2B00F0;white-space:nowrap;">Type</div><div style="position:absolute;left:2079px;top:364px;font-size:22px;line-height:22px;color:#2B00F0;white-space:nowrap;letter-spacing:-1.5px">DEFAULT</div><svg style="position:absolute;left:1193px;top:341px" width="28" height="24" viewBox="0 0 28 24"><path d="M0.6 4.6 H7.3 V16.8 H20.3 V4.6 H27.4 V23.3 H0.6 Z" fill="#ACEF8E" stroke="#80DA62" stroke-width="1.2" stroke-linejoin="round"/><rect x="10.6" y="0.6" width="6.8" height="12.8" rx="1.2" fill="#BEBEBE" stroke="#8C8C8C" stroke-width="1.1"/></svg><svg style="position:absolute;left:1253px;top:361px" width="29" height="30" viewBox="0 0 29 30"><g transform="translate(0,0)"><path d="M0.5 0.5 H20.2 V8 L14.2 13.2 V16.2 H10.6 V19.2 H14.2 V22 L10.6 25.6 H6.2 V13.2 L0.5 8 Z" fill="#EAD99A" stroke="#C9A557" stroke-width="1.3" stroke-linejoin="round"/><path d="M3.2 2.6 H17.5 V7 L13 10.8 H8 L3.2 7 Z" fill="#F4EABD" stroke="#CDBF6C" stroke-width="1"/><rect x="6.6" y="5.4" width="7.6" height="2.2" fill="#F1EFDF"/></g><g transform="translate(8,4)"><path d="M0.5 0.5 H20.2 V8 L14.2 13.2 V16.2 H10.6 V19.2 H14.2 V22 L10.6 25.6 H6.2 V13.2 L0.5 8 Z" fill="#EAD99A" stroke="#C9A557" stroke-width="1.3" stroke-linejoin="round"/><path d="M3.2 2.6 H17.5 V7 L13 10.8 H8 L3.2 7 Z" fill="#F4EABD" stroke="#CDBF6C" stroke-width="1"/><rect x="6.6" y="5.4" width="7.6" height="2.2" fill="#F1EFDF"/></g></svg><svg style="position:absolute;left:1517px;top:361px" width="31" height="28" viewBox="0 0 31 28"><path d="M0.2 0.3 H27.2 L16.4 10.8 V22.6 L11.6 27 H9.4 V10.8 Z" fill="#B9E8A2" stroke="#74AE60" stroke-width="1.6" stroke-linejoin="round"/><path d="M19.5 19 H30 L25 25 Z" fill="#5B9DF5"/></svg><svg style="position:absolute;left:1577px;top:362px" width="29" height="28" viewBox="0 0 29 28"><rect x="7" y="9.4" width="20" height="15.6" rx="0.8" fill="#fff" stroke="#6DC76A" stroke-width="2"/><line x1="7" y1="17.1" x2="27" y2="17.1" stroke="#6DC76A" stroke-width="2"/><rect x="1" y="1" width="20" height="7.6" rx="0.8" fill="#fff" stroke="#E2584C" stroke-width="2"/></svg><svg style="position:absolute;left:1831px;top:362px" width="29" height="25" viewBox="0 0 29 25"><path d="M1.5 6 H13.5 L16 1.5 L18.5 6 H27.5 V23.5 H1.5 Z" fill="#fff" stroke="#6BB66A" stroke-width="2.2" stroke-linejoin="round"/></svg><svg style="position:absolute;left:2318px;top:337px" width="31" height="31" viewBox="0 0 31 31"><rect x="17" y="7" width="14" height="24" rx="1.5" fill="#DDDDDD"/><path d="M19.5 13 H28.5 M24 11 V13 M20.5 14.5 L28 23.5 M27 14.5 L21 23" stroke="#6A7C86" stroke-width="1.3" fill="none"/><path d="M2.5 1 H15.7 L22.2 25 H2.5 Q1 25 1 23.5 V2.5 Q1 1 2.5 1 Z" fill="#6A8BEA"/><path d="M16.2 25 H22.2 L17 30.8 Z" fill="#4D55C6"/><path d="M13.6 10.6 A4.7 4.7 0 1 0 14.6 13.2 H10.2" fill="none" stroke="#fff" stroke-width="1.9"/></svg><div style="position:absolute;left:618px;top:398px;width:1744px;height:852px;overflow:hidden"><div style="position:absolute;left:0px;top:0px;width:1744px;height:42px;background:#fff"></div><div style="position:absolute;left:0px;top:42px;width:1744px;height:2px;background:#E5E5E5"></div><div style="position:absolute;left:0px;top:44px;width:1744px;height:42px;background:#F5F5F5"></div><div style="position:absolute;left:0px;top:86px;width:1744px;height:2px;background:#E5E5E5"></div><div style="position:absolute;left:0px;top:88px;width:1744px;height:42px;background:#fff"></div><div style="position:absolute;left:0px;top:130px;width:1744px;height:2px;background:#E5E5E5"></div><div style="position:absolute;left:0px;top:132px;width:1744px;height:42px;background:#F5F5F5"></div><div style="position:absolute;left:0px;top:174px;width:1744px;height:2px;background:#E5E5E5"></div><div style="position:absolute;left:0px;top:176px;width:1744px;height:42px;background:#fff"></div><div style="position:absolute;left:0px;top:218px;width:1744px;height:2px;background:#E5E5E5"></div><div style="position:absolute;left:0px;top:220px;width:1744px;height:42px;background:#F5F5F5"></div><div style="position:absolute;left:0px;top:262px;width:1744px;height:2px;background:#E5E5E5"></div><div style="position:absolute;left:0px;top:264px;width:1744px;height:42px;background:#fff"></div><div style="position:absolute;left:0px;top:306px;width:1744px;height:2px;background:#E5E5E5"></div><div style="position:absolute;left:0px;top:308px;width:1744px;height:42px;background:#F5F5F5"></div><div style="position:absolute;left:0px;top:350px;width:1744px;height:2px;background:#E5E5E5"></div><div style="position:absolute;left:0px;top:352px;width:1744px;height:42px;background:#fff"></div><div style="position:absolute;left:0px;top:394px;width:1744px;height:2px;background:#E5E5E5"></div><div style="position:absolute;left:0px;top:396px;width:1744px;height:42px;background:#F5F5F5"></div><div style="position:absolute;left:0px;top:438px;width:1744px;height:2px;background:#E5E5E5"></div><div style="position:absolute;left:0px;top:440px;width:1744px;height:42px;background:#fff"></div><div style="position:absolute;left:0px;top:482px;width:1744px;height:2px;background:#E5E5E5"></div><div style="position:absolute;left:0px;top:484px;width:1744px;height:42px;background:#F5F5F5"></div><div style="position:absolute;left:0px;top:526px;width:1744px;height:2px;background:#E5E5E5"></div><div style="position:absolute;left:0px;top:528px;width:1744px;height:42px;background:#fff"></div><div style="position:absolute;left:0px;top:570px;width:1744px;height:2px;background:#D4EDCD"></div><div style="position:absolute;left:0px;top:572px;width:1744px;height:42px;background:#E3FCDD"></div><div style="position:absolute;left:0px;top:614px;width:1744px;height:2px;background:#D4EDCD"></div><div style="position:absolute;left:0px;top:616px;width:1744px;height:42px;background:#fff"></div><div style="position:absolute;left:0px;top:658px;width:1744px;height:2px;background:#E5E5E5"></div><div style="position:absolute;left:0px;top:660px;width:1744px;height:42px;background:#F5F5F5"></div><div style="position:absolute;left:0px;top:702px;width:1744px;height:2px;background:#E5E5E5"></div><div style="position:absolute;left:0px;top:704px;width:1744px;height:42px;background:#fff"></div><div style="position:absolute;left:0px;top:746px;width:1744px;height:2px;background:#E5E5E5"></div><div style="position:absolute;left:0px;top:748px;width:1744px;height:42px;background:#F5F5F5"></div><div style="position:absolute;left:0px;top:790px;width:1744px;height:2px;background:#E5E5E5"></div><div style="position:absolute;left:0px;top:792px;width:1744px;height:42px;background:#fff"></div><div style="position:absolute;left:0px;top:834px;width:1744px;height:2px;background:#E5E5E5"></div><div style="position:absolute;left:0px;top:836px;width:1744px;height:42px;background:#F5F5F5"></div><div style="position:absolute;left:0px;top:878px;width:1744px;height:2px;background:#E5E5E5"></div><div style="position:absolute;left:11px;top:9px;font-size:22px;line-height:22px;color:#333;white-space:nowrap;">Title</div><div style="position:absolute;left:357px;top:9px;font-size:22px;line-height:22px;color:#333;white-space:nowrap;">title</div><svg style="position:absolute;left:575px;top:8px" width="28" height="24" viewBox="0 0 28 24"><path d="M0.6 4.6 H7.3 V16.8 H20.3 V4.6 H27.4 V23.3 H0.6 Z" fill="#ACEF8E" stroke="#80DA62" stroke-width="1.2" stroke-linejoin="round"/><rect x="10.6" y="0.6" width="6.8" height="12.8" rx="1.2" fill="#E9937F" stroke="#D0634E" stroke-width="1.1"/></svg><div style="position:absolute;left:1013px;top:9px;font-size:22px;line-height:22px;color:#333;white-space:nowrap;"><u>String</u></div><div style="position:absolute;left:1267px;top:9px;font-size:22px;line-height:22px;color:#333;white-space:nowrap;letter-spacing:-0.8px"><u>VARCHAR(255)</u></div><div style="position:absolute;left:1700px;top:7px;width:28px;height:22px;background:#D3D3D3"></div><div style="position:absolute;left:11px;top:53px;font-size:22px;line-height:22px;color:#333;white-space:nowrap;">Email</div><div style="position:absolute;left:357px;top:53px;font-size:22px;line-height:22px;color:#333;white-space:nowrap;">email</div><svg style="position:absolute;left:575px;top:52px" width="28" height="24" viewBox="0 0 28 24"><path d="M0.6 4.6 H7.3 V16.8 H20.3 V4.6 H27.4 V23.3 H0.6 Z" fill="#ACEF8E" stroke="#80DA62" stroke-width="1.2" stroke-linejoin="round"/><rect x="10.6" y="0.6" width="6.8" height="12.8" rx="1.2" fill="#E9937F" stroke="#D0634E" stroke-width="1.1"/></svg><div style="position:absolute;left:634px;top:51px;width:28px;height:22px;background:#fff"></div><div style="position:absolute;left:958px;top:51px;width:28px;height:22px;background:#fff"></div><div style="position:absolute;left:1013px;top:53px;font-size:22px;line-height:22px;color:#333;white-space:nowrap;"><u>String</u></div><div style="position:absolute;left:1267px;top:53px;font-size:22px;line-height:22px;color:#333;white-space:nowrap;letter-spacing:-0.8px"><u>VARCHAR(255)</u></div><div style="position:absolute;left:1700px;top:51px;width:28px;height:22px;background:#D3D3D3"></div><div style="position:absolute;left:11px;top:97px;font-size:22px;line-height:22px;color:#333;white-space:nowrap;">Password</div><div style="position:absolute;left:357px;top:97px;font-size:22px;line-height:22px;color:#333;white-space:nowrap;">password</div><svg style="position:absolute;left:575px;top:96px" width="28" height="24" viewBox="0 0 28 24"><path d="M0.6 4.6 H7.3 V16.8 H20.3 V4.6 H27.4 V23.3 H0.6 Z" fill="#ACEF8E" stroke="#80DA62" stroke-width="1.2" stroke-linejoin="round"/><rect x="10.6" y="0.6" width="6.8" height="12.8" rx="1.2" fill="#A8EE8A" stroke="#78D85A" stroke-width="1.1"/></svg><div style="position:absolute;left:1013px;top:97px;font-size:22px;line-height:22px;color:#333;white-space:nowrap;"><u>String</u></div><div style="position:absolute;left:1267px;top:97px;font-size:22px;line-height:22px;color:#333;white-space:nowrap;letter-spacing:-0.8px"><u>VARCHAR(255)</u></div><div style="position:absolute;left:1700px;top:95px;width:28px;height:22px;background:#D3D3D3"></div><div style="position:absolute;left:11px;top:141px;font-size:22px;line-height:22px;color:#333;white-space:nowrap;">App access</div><div style="position:absolute;left:357px;top:141px;font-size:22px;line-height:22px;color:#333;white-space:nowrap;">toggle</div><svg style="position:absolute;left:575px;top:140px" width="28" height="24" viewBox="0 0 28 24"><path d="M0.6 4.6 H7.3 V16.8 H20.3 V4.6 H27.4 V23.3 H0.6 Z" fill="#ACEF8E" stroke="#80DA62" stroke-width="1.2" stroke-linejoin="round"/><rect x="10.6" y="0.6" width="6.8" height="12.8" rx="1.2" fill="#A8EE8A" stroke="#78D85A" stroke-width="1.1"/></svg><svg style="position:absolute;left:639px;top:140px" width="21" height="27" viewBox="0 0 21 27"><path d="M0.5 0.5 H20.2 V8 L14.2 13.2 V16.2 H10.6 V19.2 H14.2 V22 L10.6 25.6 H6.2 V13.2 L0.5 8 Z" fill="#EAD99A" stroke="#C9A557" stroke-width="1.3" stroke-linejoin="round"/><path d="M3.2 2.6 H17.5 V7 L13 10.8 H8 L3.2 7 Z" fill="#F4EABD" stroke="#CDBF6C" stroke-width="1"/><rect x="6.6" y="5.4" width="7.6" height="2.2" fill="#F1EFDF"/></svg><div style="position:absolute;left:690px;top:141px;font-size:22px;line-height:22px;color:#333;white-space:nowrap;"><span style="text-decoration:underline;text-decoration-thickness:2px;text-underline-offset:2px;border-bottom:2px dotted #333;padding-bottom:1px">Enumerated value</span></div><svg style="position:absolute;left:959px;top:140px" width="29" height="28" viewBox="0 0 29 28"><rect x="7" y="9.4" width="20" height="15.6" rx="0.8" fill="#fff" stroke="#6DC76A" stroke-width="2"/><line x1="7" y1="17.1" x2="27" y2="17.1" stroke="#6DC76A" stroke-width="2"/><rect x="1" y="1" width="20" height="7.6" rx="0.8" fill="#fff" stroke="#6DC76A" stroke-width="2"/><rect x="0" y="13.8" width="2.4" height="7.8" rx="1" fill="#E2604F"/><rect x="0" y="24" width="2.4" height="2.2" rx="0.6" fill="#E2604F"/></svg><div style="position:absolute;left:1013px;top:141px;font-size:22px;line-height:22px;color:#333;white-space:nowrap;"><u>Combo</u></div><div style="position:absolute;left:1267px;top:141px;font-size:22px;line-height:22px;color:#333;white-space:nowrap;letter-spacing:-0.8px"><u>ENUM</u></div><div style="position:absolute;left:1459px;top:141px;font-size:22px;line-height:22px;color:#333;white-space:nowrap;">y</div><div style="position:absolute;left:1700px;top:139px;width:28px;height:22px;background:#D3D3D3"></div><div style="position:absolute;left:11px;top:185px;font-size:22px;line-height:22px;color:#333;white-space:nowrap;">Lessons qty</div><div style="position:absolute;left:357px;top:185px;font-size:22px;line-height:22px;color:#333;white-space:nowrap;">lessonQty</div><svg style="position:absolute;left:575px;top:184px" width="28" height="24" viewBox="0 0 28 24"><path d="M0.6 4.6 H7.3 V16.8 H20.3 V4.6 H27.4 V23.3 H0.6 Z" fill="#ACEF8E" stroke="#80DA62" stroke-width="1.2" stroke-linejoin="round"/><rect x="10.6" y="0.6" width="6.8" height="12.8" rx="1.2" fill="#BEBEBE" stroke="#8C8C8C" stroke-width="1.1"/></svg><div style="position:absolute;left:1013px;top:185px;font-size:22px;line-height:22px;color:#333;white-space:nowrap;"><u>Number</u></div><div style="position:absolute;left:1267px;top:185px;font-size:22px;line-height:22px;color:#333;white-space:nowrap;letter-spacing:-0.8px"><u>INT(11)</u></div><div style="position:absolute;left:1459px;top:185px;font-size:22px;line-height:22px;color:#333;white-space:nowrap;">0</div><div style="position:absolute;left:11px;top:229px;font-size:22px;line-height:22px;color:#333;white-space:nowrap;">Contact details</div><div style="position:absolute;left:357px;top:229px;font-size:22px;line-height:22px;color:#333;white-space:nowrap;">contact</div><svg style="position:absolute;left:575px;top:228px" width="28" height="24" viewBox="0 0 28 24"><path d="M0.6 4.6 H7.3 V16.8 H20.3 V4.6 H27.4 V23.3 H0.6 Z" fill="#ACEF8E" stroke="#80DA62" stroke-width="1.2" stroke-linejoin="round"/><rect x="10.6" y="0.6" width="6.8" height="12.8" rx="1.2" fill="#A8EE8A" stroke="#78D85A" stroke-width="1.1"/></svg><div style="position:absolute;left:634px;top:227px;width:28px;height:22px;background:#fff"></div><div style="position:absolute;left:958px;top:227px;width:28px;height:22px;background:#fff"></div><div style="position:absolute;left:1013px;top:229px;font-size:22px;line-height:22px;color:#333;white-space:nowrap;"><u>Field group</u></div><div style="position:absolute;left:1700px;top:227px;width:28px;height:22px;background:#fff"></div><div style="position:absolute;left:11px;top:273px;font-size:22px;line-height:22px;color:#333;white-space:nowrap;">Phone</div><div style="position:absolute;left:357px;top:273px;font-size:22px;line-height:22px;color:#333;white-space:nowrap;">phone</div><svg style="position:absolute;left:575px;top:272px" width="28" height="24" viewBox="0 0 28 24"><path d="M0.6 4.6 H7.3 V16.8 H20.3 V4.6 H27.4 V23.3 H0.6 Z" fill="#ACEF8E" stroke="#80DA62" stroke-width="1.2" stroke-linejoin="round"/><rect x="10.6" y="0.6" width="6.8" height="12.8" rx="1.2" fill="#A8EE8A" stroke="#78D85A" stroke-width="1.1"/></svg><div style="position:absolute;left:1013px;top:273px;font-size:22px;line-height:22px;color:#333;white-space:nowrap;"><u>String</u></div><div style="position:absolute;left:1267px;top:273px;font-size:22px;line-height:22px;color:#333;white-space:nowrap;letter-spacing:-0.8px"><u>VARCHAR(255)</u></div><div style="position:absolute;left:1700px;top:271px;width:28px;height:22px;background:#D3D3D3"></div><div style="position:absolute;left:11px;top:317px;font-size:22px;line-height:22px;color:#333;white-space:nowrap;">WhatsApp</div><div style="position:absolute;left:357px;top:317px;font-size:22px;line-height:22px;color:#333;white-space:nowrap;">wa</div><svg style="position:absolute;left:575px;top:316px" width="28" height="24" viewBox="0 0 28 24"><path d="M0.6 4.6 H7.3 V16.8 H20.3 V4.6 H27.4 V23.3 H0.6 Z" fill="#ACEF8E" stroke="#80DA62" stroke-width="1.2" stroke-linejoin="round"/><rect x="10.6" y="0.6" width="6.8" height="12.8" rx="1.2" fill="#A8EE8A" stroke="#78D85A" stroke-width="1.1"/></svg><svg style="position:absolute;left:639px;top:316px" width="21" height="27" viewBox="0 0 21 27"><path d="M0.5 0.5 H20.2 V8 L14.2 13.2 V16.2 H10.6 V19.2 H14.2 V22 L10.6 25.6 H6.2 V13.2 L0.5 8 Z" fill="#EAD99A" stroke="#C9A557" stroke-width="1.3" stroke-linejoin="round"/><path d="M3.2 2.6 H17.5 V7 L13 10.8 H8 L3.2 7 Z" fill="#F4EABD" stroke="#CDBF6C" stroke-width="1"/><rect x="6.6" y="5.4" width="7.6" height="2.2" fill="#F1EFDF"/></svg><div style="position:absolute;left:690px;top:317px;font-size:22px;line-height:22px;color:#333;white-space:nowrap;"><span style="text-decoration:underline;text-decoration-thickness:2px;text-underline-offset:2px;border-bottom:2px dotted #333;padding-bottom:1px">Enumerated value</span></div><svg style="position:absolute;left:959px;top:316px" width="29" height="28" viewBox="0 0 29 28"><rect x="7" y="9.4" width="20" height="15.6" rx="0.8" fill="#fff" stroke="#6DC76A" stroke-width="2"/><line x1="7" y1="17.1" x2="27" y2="17.1" stroke="#6DC76A" stroke-width="2"/><rect x="1" y="1" width="20" height="7.6" rx="0.8" fill="#fff" stroke="#6DC76A" stroke-width="2"/><rect x="0" y="13.8" width="2.4" height="7.8" rx="1" fill="#E2604F"/><rect x="0" y="24" width="2.4" height="2.2" rx="0.6" fill="#E2604F"/></svg><div style="position:absolute;left:1013px;top:317px;font-size:22px;line-height:22px;color:#333;white-space:nowrap;"><u>Combo</u></div><div style="position:absolute;left:1267px;top:317px;font-size:22px;line-height:22px;color:#333;white-space:nowrap;letter-spacing:-0.8px"><u>ENUM</u></div><div style="position:absolute;left:1459px;top:317px;font-size:22px;line-height:22px;color:#333;white-space:nowrap;">n</div><div style="position:absolute;left:1700px;top:315px;width:28px;height:22px;background:#D3D3D3"></div><div style="position:absolute;left:11px;top:361px;font-size:22px;line-height:22px;color:#333;white-space:nowrap;">Telegram</div><div style="position:absolute;left:357px;top:361px;font-size:22px;line-height:22px;color:#333;white-space:nowrap;">tg</div><svg style="position:absolute;left:575px;top:360px" width="28" height="24" viewBox="0 0 28 24"><path d="M0.6 4.6 H7.3 V16.8 H20.3 V4.6 H27.4 V23.3 H0.6 Z" fill="#ACEF8E" stroke="#80DA62" stroke-width="1.2" stroke-linejoin="round"/><rect x="10.6" y="0.6" width="6.8" height="12.8" rx="1.2" fill="#A8EE8A" stroke="#78D85A" stroke-width="1.1"/></svg><svg style="position:absolute;left:639px;top:360px" width="21" height="27" viewBox="0 0 21 27"><path d="M0.5 0.5 H20.2 V8 L14.2 13.2 V16.2 H10.6 V19.2 H14.2 V22 L10.6 25.6 H6.2 V13.2 L0.5 8 Z" fill="#EAD99A" stroke="#C9A557" stroke-width="1.3" stroke-linejoin="round"/><path d="M3.2 2.6 H17.5 V7 L13 10.8 H8 L3.2 7 Z" fill="#F4EABD" stroke="#CDBF6C" stroke-width="1"/><rect x="6.6" y="5.4" width="7.6" height="2.2" fill="#F1EFDF"/></svg><div style="position:absolute;left:690px;top:361px;font-size:22px;line-height:22px;color:#333;white-space:nowrap;"><span style="text-decoration:underline;text-decoration-thickness:2px;text-underline-offset:2px;border-bottom:2px dotted #333;padding-bottom:1px">Enumerated value</span></div><svg style="position:absolute;left:959px;top:360px" width="29" height="28" viewBox="0 0 29 28"><rect x="7" y="9.4" width="20" height="15.6" rx="0.8" fill="#fff" stroke="#6DC76A" stroke-width="2"/><line x1="7" y1="17.1" x2="27" y2="17.1" stroke="#6DC76A" stroke-width="2"/><rect x="1" y="1" width="20" height="7.6" rx="0.8" fill="#fff" stroke="#6DC76A" stroke-width="2"/><rect x="0" y="13.8" width="2.4" height="7.8" rx="1" fill="#E2604F"/><rect x="0" y="24" width="2.4" height="2.2" rx="0.6" fill="#E2604F"/></svg><div style="position:absolute;left:1013px;top:361px;font-size:22px;line-height:22px;color:#333;white-space:nowrap;"><u>Combo</u></div><div style="position:absolute;left:1267px;top:361px;font-size:22px;line-height:22px;color:#333;white-space:nowrap;letter-spacing:-0.8px"><u>ENUM</u></div><div style="position:absolute;left:1459px;top:361px;font-size:22px;line-height:22px;color:#333;white-space:nowrap;">n</div><div style="position:absolute;left:1700px;top:359px;width:28px;height:22px;background:#D3D3D3"></div><div style="position:absolute;left:11px;top:405px;font-size:22px;line-height:22px;color:#333;white-space:nowrap;">Viber</div><div style="position:absolute;left:357px;top:405px;font-size:22px;line-height:22px;color:#333;white-space:nowrap;">vb</div><svg style="position:absolute;left:575px;top:404px" width="28" height="24" viewBox="0 0 28 24"><path d="M0.6 4.6 H7.3 V16.8 H20.3 V4.6 H27.4 V23.3 H0.6 Z" fill="#ACEF8E" stroke="#80DA62" stroke-width="1.2" stroke-linejoin="round"/><rect x="10.6" y="0.6" width="6.8" height="12.8" rx="1.2" fill="#A8EE8A" stroke="#78D85A" stroke-width="1.1"/></svg><svg style="position:absolute;left:639px;top:404px" width="21" height="27" viewBox="0 0 21 27"><path d="M0.5 0.5 H20.2 V8 L14.2 13.2 V16.2 H10.6 V19.2 H14.2 V22 L10.6 25.6 H6.2 V13.2 L0.5 8 Z" fill="#EAD99A" stroke="#C9A557" stroke-width="1.3" stroke-linejoin="round"/><path d="M3.2 2.6 H17.5 V7 L13 10.8 H8 L3.2 7 Z" fill="#F4EABD" stroke="#CDBF6C" stroke-width="1"/><rect x="6.6" y="5.4" width="7.6" height="2.2" fill="#F1EFDF"/></svg><div style="position:absolute;left:690px;top:405px;font-size:22px;line-height:22px;color:#333;white-space:nowrap;"><span style="text-decoration:underline;text-decoration-thickness:2px;text-underline-offset:2px;border-bottom:2px dotted #333;padding-bottom:1px">Enumerated value</span></div><svg style="position:absolute;left:959px;top:404px" width="29" height="28" viewBox="0 0 29 28"><rect x="7" y="9.4" width="20" height="15.6" rx="0.8" fill="#fff" stroke="#6DC76A" stroke-width="2"/><line x1="7" y1="17.1" x2="27" y2="17.1" stroke="#6DC76A" stroke-width="2"/><rect x="1" y="1" width="20" height="7.6" rx="0.8" fill="#fff" stroke="#6DC76A" stroke-width="2"/><rect x="0" y="13.8" width="2.4" height="7.8" rx="1" fill="#E2604F"/><rect x="0" y="24" width="2.4" height="2.2" rx="0.6" fill="#E2604F"/></svg><div style="position:absolute;left:1013px;top:405px;font-size:22px;line-height:22px;color:#333;white-space:nowrap;"><u>Combo</u></div><div style="position:absolute;left:1267px;top:405px;font-size:22px;line-height:22px;color:#333;white-space:nowrap;letter-spacing:-0.8px"><u>ENUM</u></div><div style="position:absolute;left:1459px;top:405px;font-size:22px;line-height:22px;color:#333;white-space:nowrap;">n</div><div style="position:absolute;left:1700px;top:403px;width:28px;height:22px;background:#D3D3D3"></div><div style="position:absolute;left:11px;top:449px;font-size:22px;line-height:22px;color:#333;white-space:nowrap;">Youtube introduction video link</div><div style="position:absolute;left:357px;top:449px;font-size:22px;line-height:22px;color:#333;white-space:nowrap;">youtubeLink</div><svg style="position:absolute;left:575px;top:448px" width="28" height="24" viewBox="0 0 28 24"><path d="M0.6 4.6 H7.3 V16.8 H20.3 V4.6 H27.4 V23.3 H0.6 Z" fill="#ACEF8E" stroke="#80DA62" stroke-width="1.2" stroke-linejoin="round"/><rect x="10.6" y="0.6" width="6.8" height="12.8" rx="1.2" fill="#A8EE8A" stroke="#78D85A" stroke-width="1.1"/></svg><div style="position:absolute;left:1013px;top:449px;font-size:22px;line-height:22px;color:#333;white-space:nowrap;"><u>String</u></div><div style="position:absolute;left:1267px;top:449px;font-size:22px;line-height:22px;color:#333;white-space:nowrap;letter-spacing:-0.8px"><u>VARCHAR(255)</u></div><div style="position:absolute;left:1700px;top:447px;width:28px;height:22px;background:#D3D3D3"></div><div style="position:absolute;left:11px;top:493px;font-size:22px;line-height:22px;color:#333;white-space:nowrap;">Courses</div><div style="position:absolute;left:357px;top:493px;font-size:22px;line-height:22px;color:#333;white-space:nowrap;">courseIds</div><svg style="position:absolute;left:575px;top:492px" width="28" height="24" viewBox="0 0 28 24"><path d="M0.6 4.6 H7.3 V16.8 H20.3 V4.6 H27.4 V23.3 H0.6 Z" fill="#ACEF8E" stroke="#80DA62" stroke-width="1.2" stroke-linejoin="round"/><rect x="10.6" y="0.6" width="6.8" height="12.8" rx="1.2" fill="#A8EE8A" stroke="#78D85A" stroke-width="1.1"/></svg><svg style="position:absolute;left:635px;top:490px" width="29" height="30" viewBox="0 0 29 30"><g transform="translate(0,0)"><path d="M0.5 0.5 H20.2 V8 L14.2 13.2 V16.2 H10.6 V19.2 H14.2 V22 L10.6 25.6 H6.2 V13.2 L0.5 8 Z" fill="#EAD99A" stroke="#C9A557" stroke-width="1.3" stroke-linejoin="round"/><path d="M3.2 2.6 H17.5 V7 L13 10.8 H8 L3.2 7 Z" fill="#F4EABD" stroke="#CDBF6C" stroke-width="1"/><rect x="6.6" y="5.4" width="7.6" height="2.2" fill="#F1EFDF"/></g><g transform="translate(8,4)"><path d="M0.5 0.5 H20.2 V8 L14.2 13.2 V16.2 H10.6 V19.2 H14.2 V22 L10.6 25.6 H6.2 V13.2 L0.5 8 Z" fill="#EAD99A" stroke="#C9A557" stroke-width="1.3" stroke-linejoin="round"/><path d="M3.2 2.6 H17.5 V7 L13 10.8 H8 L3.2 7 Z" fill="#F4EABD" stroke="#CDBF6C" stroke-width="1"/><rect x="6.6" y="5.4" width="7.6" height="2.2" fill="#F1EFDF"/></g></svg><div style="position:absolute;left:690px;top:493px;font-size:22px;line-height:22px;color:#333;white-space:nowrap;"><span style="text-decoration:underline;text-decoration-thickness:2px;text-underline-offset:2px;border-bottom:2px dotted #333;padding-bottom:1px">Course</span></div><svg style="position:absolute;left:899px;top:490px" width="31" height="28" viewBox="0 0 31 28"><path d="M0.2 0.3 H27.2 L16.4 10.8 V22.6 L11.6 27 H9.4 V10.8 Z" fill="#B9E8A2" stroke="#74AE60" stroke-width="1.6" stroke-linejoin="round"/><path d="M19.5 19 H30 L25 25 Z" fill="#5B9DF5"/></svg><svg style="position:absolute;left:959px;top:492px" width="29" height="28" viewBox="0 0 29 28"><rect x="7" y="9.4" width="20" height="15.6" rx="0.8" fill="#fff" stroke="#9C9C9C" stroke-width="2"/><line x1="7" y1="17.1" x2="27" y2="17.1" stroke="#9C9C9C" stroke-width="2"/><rect x="1" y="1" width="20" height="7.6" rx="0.8" fill="#fff" stroke="#E2584C" stroke-width="2"/></svg><div style="position:absolute;left:1013px;top:493px;font-size:22px;line-height:22px;color:#333;white-space:nowrap;"><u>Checkboxes</u></div><div style="position:absolute;left:1267px;top:493px;font-size:22px;line-height:22px;color:#333;white-space:nowrap;letter-spacing:-0.8px"><u>VARCHAR(255)</u></div><div style="position:absolute;left:1700px;top:491px;width:28px;height:22px;background:#D3D3D3"></div><div style="position:absolute;left:11px;top:537px;font-size:22px;line-height:22px;color:#333;white-space:nowrap;">Country</div><div style="position:absolute;left:357px;top:537px;font-size:22px;line-height:22px;color:#333;white-space:nowrap;">countryId</div><svg style="position:absolute;left:575px;top:536px" width="28" height="24" viewBox="0 0 28 24"><path d="M0.6 4.6 H7.3 V16.8 H20.3 V4.6 H27.4 V23.3 H0.6 Z" fill="#ACEF8E" stroke="#80DA62" stroke-width="1.2" stroke-linejoin="round"/><rect x="10.6" y="0.6" width="6.8" height="12.8" rx="1.2" fill="#A8EE8A" stroke="#78D85A" stroke-width="1.1"/></svg><svg style="position:absolute;left:639px;top:536px" width="21" height="27" viewBox="0 0 21 27"><path d="M0.5 0.5 H20.2 V8 L14.2 13.2 V16.2 H10.6 V19.2 H14.2 V22 L10.6 25.6 H6.2 V13.2 L0.5 8 Z" fill="#EAD99A" stroke="#C9A557" stroke-width="1.3" stroke-linejoin="round"/><path d="M3.2 2.6 H17.5 V7 L13 10.8 H8 L3.2 7 Z" fill="#F4EABD" stroke="#CDBF6C" stroke-width="1"/><rect x="6.6" y="5.4" width="7.6" height="2.2" fill="#F1EFDF"/></svg><div style="position:absolute;left:690px;top:537px;font-size:22px;line-height:22px;color:#333;white-space:nowrap;"><span style="text-decoration:underline;text-decoration-thickness:2px;text-underline-offset:2px;border-bottom:2px dotted #333;padding-bottom:1px">Country</span></div><svg style="position:absolute;left:959px;top:536px" width="29" height="28" viewBox="0 0 29 28"><rect x="7" y="9.4" width="20" height="15.6" rx="0.8" fill="#fff" stroke="#6DC76A" stroke-width="2"/><line x1="7" y1="17.1" x2="27" y2="17.1" stroke="#6DC76A" stroke-width="2"/><rect x="1" y="1" width="20" height="7.6" rx="0.8" fill="#fff" stroke="#6DC76A" stroke-width="2"/><rect x="0" y="13.8" width="2.4" height="7.8" rx="1" fill="#E2604F"/><rect x="0" y="24" width="2.4" height="2.2" rx="0.6" fill="#E2604F"/></svg><div style="position:absolute;left:1013px;top:537px;font-size:22px;line-height:22px;color:#333;white-space:nowrap;"><u>Combo</u></div><div style="position:absolute;left:1267px;top:537px;font-size:22px;line-height:22px;color:#333;white-space:nowrap;letter-spacing:-0.8px"><u>INT(11)</u></div><div style="position:absolute;left:1459px;top:537px;font-size:22px;line-height:22px;color:#333;white-space:nowrap;">0</div><div style="position:absolute;left:11px;top:581px;font-size:22px;line-height:22px;color:#333;white-space:nowrap;">Working weekdays</div><div style="position:absolute;left:357px;top:581px;font-size:22px;line-height:22px;color:#333;white-space:nowrap;">wdays</div><svg style="position:absolute;left:575px;top:580px" width="28" height="24" viewBox="0 0 28 24"><path d="M0.6 4.6 H7.3 V16.8 H20.3 V4.6 H27.4 V23.3 H0.6 Z" fill="#ACEF8E" stroke="#80DA62" stroke-width="1.2" stroke-linejoin="round"/><rect x="10.6" y="0.6" width="6.8" height="12.8" rx="1.2" fill="#A8EE8A" stroke="#78D85A" stroke-width="1.1"/></svg><svg style="position:absolute;left:635px;top:578px" width="29" height="30" viewBox="0 0 29 30"><g transform="translate(0,0)"><path d="M0.5 0.5 H20.2 V8 L14.2 13.2 V16.2 H10.6 V19.2 H14.2 V22 L10.6 25.6 H6.2 V13.2 L0.5 8 Z" fill="#EAD99A" stroke="#C9A557" stroke-width="1.3" stroke-linejoin="round"/><path d="M3.2 2.6 H17.5 V7 L13 10.8 H8 L3.2 7 Z" fill="#F4EABD" stroke="#CDBF6C" stroke-width="1"/><rect x="6.6" y="5.4" width="7.6" height="2.2" fill="#F1EFDF"/></g><g transform="translate(8,4)"><path d="M0.5 0.5 H20.2 V8 L14.2 13.2 V16.2 H10.6 V19.2 H14.2 V22 L10.6 25.6 H6.2 V13.2 L0.5 8 Z" fill="#EAD99A" stroke="#C9A557" stroke-width="1.3" stroke-linejoin="round"/><path d="M3.2 2.6 H17.5 V7 L13 10.8 H8 L3.2 7 Z" fill="#F4EABD" stroke="#CDBF6C" stroke-width="1"/><rect x="6.6" y="5.4" width="7.6" height="2.2" fill="#F1EFDF"/></g></svg><div style="position:absolute;left:690px;top:581px;font-size:22px;line-height:22px;color:#333;white-space:nowrap;"><span style="text-decoration:underline;text-decoration-thickness:2px;text-underline-offset:2px;border-bottom:2px dotted #333;padding-bottom:1px">Enumerated value</span></div><svg style="position:absolute;left:959px;top:580px" width="29" height="28" viewBox="0 0 29 28"><rect x="7" y="9.4" width="20" height="15.6" rx="0.8" fill="#fff" stroke="#9C9C9C" stroke-width="2"/><line x1="7" y1="17.1" x2="27" y2="17.1" stroke="#9C9C9C" stroke-width="2"/><rect x="1" y="1" width="20" height="7.6" rx="0.8" fill="#fff" stroke="#E2584C" stroke-width="2"/></svg><div style="position:absolute;left:1013px;top:581px;font-size:22px;line-height:22px;color:#333;white-space:nowrap;"><u>Combo</u></div><div style="position:absolute;left:1267px;top:581px;font-size:22px;line-height:22px;color:#333;white-space:nowrap;letter-spacing:-0.8px"><u>SET</u></div><div style="position:absolute;left:1700px;top:579px;width:28px;height:22px;background:#D3D3D3"></div><div style="position:absolute;left:346px;top:572px;width:212px;height:41px;border:2px dotted #1A1AE0"></div><div style="position:absolute;left:11px;top:625px;font-size:22px;line-height:22px;color:#333;white-space:nowrap;">Native speaker</div><div style="position:absolute;left:357px;top:625px;font-size:22px;line-height:22px;color:#333;white-space:nowrap;">isNativeSpeaker</div><svg style="position:absolute;left:575px;top:624px" width="28" height="24" viewBox="0 0 28 24"><path d="M0.6 4.6 H7.3 V16.8 H20.3 V4.6 H27.4 V23.3 H0.6 Z" fill="#ACEF8E" stroke="#80DA62" stroke-width="1.2" stroke-linejoin="round"/><rect x="10.6" y="0.6" width="6.8" height="12.8" rx="1.2" fill="#A8EE8A" stroke="#78D85A" stroke-width="1.1"/></svg><div style="position:absolute;left:1013px;top:625px;font-size:22px;line-height:22px;color:#333;white-space:nowrap;"><u>Checkbox</u></div><div style="position:absolute;left:1267px;top:625px;font-size:22px;line-height:22px;color:#333;white-space:nowrap;letter-spacing:-0.8px"><u>BOOLEAN</u></div><div style="position:absolute;left:1459px;top:625px;font-size:22px;line-height:22px;color:#333;white-space:nowrap;">0</div><div style="position:absolute;left:11px;top:669px;font-size:22px;line-height:22px;color:#333;white-space:nowrap;">Photo</div><div style="position:absolute;left:357px;top:669px;font-size:22px;line-height:22px;color:#333;white-space:nowrap;">photo</div><svg style="position:absolute;left:575px;top:668px" width="28" height="24" viewBox="0 0 28 24"><path d="M0.6 4.6 H7.3 V16.8 H20.3 V4.6 H27.4 V23.3 H0.6 Z" fill="#ACEF8E" stroke="#80DA62" stroke-width="1.2" stroke-linejoin="round"/><rect x="10.6" y="0.6" width="6.8" height="12.8" rx="1.2" fill="#A8EE8A" stroke="#78D85A" stroke-width="1.1"/></svg><div style="position:absolute;left:634px;top:667px;width:28px;height:22px;background:#fff"></div><div style="position:absolute;left:958px;top:667px;width:28px;height:22px;background:#fff"></div><div style="position:absolute;left:1013px;top:669px;font-size:22px;line-height:22px;color:#333;white-space:nowrap;"><u>File-upload panel</u></div><div style="position:absolute;left:1700px;top:667px;width:28px;height:22px;background:#fff"></div><div style="position:absolute;left:11px;top:713px;font-size:22px;line-height:22px;color:#333;white-space:nowrap;">Payout</div><div style="position:absolute;left:357px;top:713px;font-size:22px;line-height:22px;color:#333;white-space:nowrap;">payout</div><svg style="position:absolute;left:575px;top:712px" width="28" height="24" viewBox="0 0 28 24"><path d="M0.6 4.6 H7.3 V16.8 H20.3 V4.6 H27.4 V23.3 H0.6 Z" fill="#ACEF8E" stroke="#80DA62" stroke-width="1.2" stroke-linejoin="round"/><rect x="10.6" y="0.6" width="6.8" height="12.8" rx="1.2" fill="#A8EE8A" stroke="#78D85A" stroke-width="1.1"/></svg><div style="position:absolute;left:1013px;top:713px;font-size:22px;line-height:22px;color:#333;white-space:nowrap;"><u>Field group</u></div><div style="position:absolute;left:11px;top:757px;font-size:22px;line-height:22px;color:#333;white-space:nowrap;">Method</div><div style="position:absolute;left:357px;top:757px;font-size:22px;line-height:22px;color:#333;white-space:nowrap;">payoutMethodId</div><svg style="position:absolute;left:575px;top:756px" width="28" height="24" viewBox="0 0 28 24"><path d="M0.6 4.6 H7.3 V16.8 H20.3 V4.6 H27.4 V23.3 H0.6 Z" fill="#ACEF8E" stroke="#80DA62" stroke-width="1.2" stroke-linejoin="round"/><rect x="10.6" y="0.6" width="6.8" height="12.8" rx="1.2" fill="#A8EE8A" stroke="#78D85A" stroke-width="1.1"/></svg><svg style="position:absolute;left:639px;top:756px" width="21" height="27" viewBox="0 0 21 27"><path d="M0.5 0.5 H20.2 V8 L14.2 13.2 V16.2 H10.6 V19.2 H14.2 V22 L10.6 25.6 H6.2 V13.2 L0.5 8 Z" fill="#EAD99A" stroke="#C9A557" stroke-width="1.3" stroke-linejoin="round"/><path d="M3.2 2.6 H17.5 V7 L13 10.8 H8 L3.2 7 Z" fill="#F4EABD" stroke="#CDBF6C" stroke-width="1"/><rect x="6.6" y="5.4" width="7.6" height="2.2" fill="#F1EFDF"/></svg><div style="position:absolute;left:690px;top:757px;font-size:22px;line-height:22px;color:#333;white-space:nowrap;"><span style="text-decoration:underline;text-decoration-thickness:2px;text-underline-offset:2px;border-bottom:2px dotted #333;padding-bottom:1px">Payment method</span></div><svg style="position:absolute;left:899px;top:754px" width="31" height="28" viewBox="0 0 31 28"><path d="M0.2 0.3 H27.2 L16.4 10.8 V22.6 L11.6 27 H9.4 V10.8 Z" fill="#B9E8A2" stroke="#74AE60" stroke-width="1.6" stroke-linejoin="round"/><path d="M19.5 19 H30 L25 25 Z" fill="#5B9DF5"/></svg><svg style="position:absolute;left:959px;top:756px" width="29" height="28" viewBox="0 0 29 28"><rect x="7" y="9.4" width="20" height="15.6" rx="0.8" fill="#fff" stroke="#6DC76A" stroke-width="2"/><line x1="7" y1="17.1" x2="27" y2="17.1" stroke="#6DC76A" stroke-width="2"/><rect x="1" y="1" width="20" height="7.6" rx="0.8" fill="#fff" stroke="#6DC76A" stroke-width="2"/><rect x="0" y="13.8" width="2.4" height="7.8" rx="1" fill="#E2604F"/><rect x="0" y="24" width="2.4" height="2.2" rx="0.6" fill="#E2604F"/></svg><div style="position:absolute;left:1013px;top:757px;font-size:22px;line-height:22px;color:#333;white-space:nowrap;"><u>Combo</u></div><div style="position:absolute;left:1267px;top:757px;font-size:22px;line-height:22px;color:#333;white-space:nowrap;letter-spacing:-0.8px"><u>INT(11)</u></div><div style="position:absolute;left:1459px;top:757px;font-size:22px;line-height:22px;color:#333;white-space:nowrap;">0</div><div style="position:absolute;left:1700px;top:755px;width:28px;height:22px;background:#fff"></div><div style="position:absolute;left:11px;top:801px;font-size:22px;line-height:22px;color:#333;white-space:nowrap;">Account</div><div style="position:absolute;left:357px;top:801px;font-size:22px;line-height:22px;color:#333;white-space:nowrap;">payoutAccount</div><svg style="position:absolute;left:575px;top:800px" width="28" height="24" viewBox="0 0 28 24"><path d="M0.6 4.6 H7.3 V16.8 H20.3 V4.6 H27.4 V23.3 H0.6 Z" fill="#ACEF8E" stroke="#80DA62" stroke-width="1.2" stroke-linejoin="round"/><rect x="10.6" y="0.6" width="6.8" height="12.8" rx="1.2" fill="#A8EE8A" stroke="#78D85A" stroke-width="1.1"/></svg><div style="position:absolute;left:1013px;top:801px;font-size:22px;line-height:22px;color:#333;white-space:nowrap;"><u>String</u></div><div style="position:absolute;left:1267px;top:801px;font-size:22px;line-height:22px;color:#333;white-space:nowrap;letter-spacing:-0.8px"><u>VARCHAR(255)</u></div><div style="position:absolute;left:1700px;top:799px;width:28px;height:22px;background:#D3D3D3"></div><div style="position:absolute;left:11px;top:845px;font-size:22px;line-height:22px;color:#333;white-space:nowrap;">Last payment date</div><div style="position:absolute;left:357px;top:845px;font-size:22px;line-height:22px;color:#333;white-space:nowrap;">payoutLastDate</div><svg style="position:absolute;left:575px;top:844px" width="28" height="24" viewBox="0 0 28 24"><path d="M0.6 4.6 H7.3 V16.8 H20.3 V4.6 H27.4 V23.3 H0.6 Z" fill="#ACEF8E" stroke="#80DA62" stroke-width="1.2" stroke-linejoin="round"/><rect x="10.6" y="0.6" width="6.8" height="12.8" rx="1.2" fill="#A8EE8A" stroke="#78D85A" stroke-width="1.1"/></svg><div style="position:absolute;left:958px;top:843px;width:28px;height:22px;background:#fff"></div><div style="position:absolute;left:1013px;top:845px;font-size:22px;line-height:22px;color:#333;white-space:nowrap;"><u>Datetime picker</u></div><div style="position:absolute;left:1267px;top:845px;font-size:22px;line-height:22px;color:#333;white-space:nowrap;letter-spacing:-0.8px"><u>DATETIME</u></div><div style="position:absolute;left:1459px;top:845px;font-size:22px;line-height:22px;color:#333;white-space:nowrap;">0000-00-00 00:00:00</div><div style="position:absolute;left:1700px;top:843px;width:28px;height:22px;background:#fff"></div></div><div style="position:absolute;left:2362px;top:398px;width:20px;height:719px;background:#898989"></div><div style="position:absolute;left:618px;top:1250px;width:1764px;height:53px;background:#EFEFEF;border-top:2px solid #D0D0D0"></div><svg style="position:absolute;left:630px;top:1265px" width="20" height="24" viewBox="0 0 20 24"><defs><linearGradient id="gpg" x1="0" y1="0" x2="1" y2="1"><stop offset="0" stop-color="#CCD5F7"/><stop offset="1" stop-color="#8D9CE6"/></linearGradient></defs><rect x="0.5" y="1" width="4" height="22" rx="1" fill="url(#gpg)" stroke="#9AA8E6" stroke-width="0.8"/><path d="M19.5 0.5 V23.5 L6 12 Z" fill="url(#gpg)" stroke="#9AA8E6" stroke-width="0.8"/></svg><svg style="position:absolute;left:673px;top:1265px" width="13" height="24" viewBox="0 0 13 24"><defs><linearGradient id="gpg" x1="0" y1="0" x2="1" y2="1"><stop offset="0" stop-color="#CCD5F7"/><stop offset="1" stop-color="#8D9CE6"/></linearGradient></defs><path d="M12.5 2 V22 L1 12 Z" fill="url(#gpg)" stroke="#9AA8E6" stroke-width="0.8"/></svg><div style="position:absolute;left:710px;top:1264px;width:2px;height:28px;background:#CFCFCF"></div><div style="position:absolute;left:727px;top:1267px;font-size:22px;line-height:22px;color:#333;white-space:nowrap;">Page</div><div style="position:absolute;left:796px;top:1258px;width:99px;height:37px;background:#fff;border:2px solid #D0D0D0"></div><div style="position:absolute;left:802px;top:1267px;font-size:22px;line-height:22px;color:#333;white-space:nowrap;">1</div><div style="position:absolute;left:907px;top:1267px;font-size:22px;line-height:22px;color:#333;white-space:nowrap;">of 1</div><div style="position:absolute;left:962px;top:1264px;width:2px;height:28px;background:#CFCFCF"></div><svg style="position:absolute;left:983px;top:1265px" width="13" height="24" viewBox="0 0 13 24"><defs><linearGradient id="gpg" x1="0" y1="0" x2="1" y2="1"><stop offset="0" stop-color="#CCD5F7"/><stop offset="1" stop-color="#8D9CE6"/></linearGradient></defs><path d="M0.5 2 V22 L12 12 Z" fill="url(#gpg)" stroke="#9AA8E6" stroke-width="0.8"/></svg><svg style="position:absolute;left:1023px;top:1265px" width="20" height="24" viewBox="0 0 20 24"><defs><linearGradient id="gpg" x1="0" y1="0" x2="1" y2="1"><stop offset="0" stop-color="#CCD5F7"/><stop offset="1" stop-color="#8D9CE6"/></linearGradient></defs><path d="M0.5 0.5 V23.5 L14 12 Z" fill="url(#gpg)" stroke="#9AA8E6" stroke-width="0.8"/><rect x="15.5" y="1" width="4" height="22" rx="1" fill="url(#gpg)" stroke="#9AA8E6" stroke-width="0.8"/></svg><div style="position:absolute;left:1060px;top:1264px;width:2px;height:28px;background:#CFCFCF"></div><svg style="position:absolute;left:1074px;top:1264px" width="29" height="29" viewBox="0 0 29 29"><path d="M4.5 10.5 A10 9.5 0 0 1 21.5 7.5" fill="none" stroke="#4E80DA" stroke-width="5.6"/><path d="M4.5 10.5 A10 9.5 0 0 1 21.5 7.5" fill="none" stroke="#AFCFF7" stroke-width="3.2"/><path d="M26.8 3.6 V15.3 H15.2 Z" fill="#B7D5F8" stroke="#4E80DA" stroke-width="1.4" stroke-linejoin="round"/><path d="M23.5 17.5 A10 9.5 0 0 1 6.5 20.5" fill="none" stroke="#4E80DA" stroke-width="5.6"/><path d="M23.5 17.5 A10 9.5 0 0 1 6.5 20.5" fill="none" stroke="#8FB8F5" stroke-width="3.2"/><path d="M1.2 12.7 H12.8 L1.2 24.4 Z" fill="#D3E5FB" stroke="#4E80DA" stroke-width="1.4" stroke-linejoin="round"/></svg><div style="position:absolute;left:1114px;top:1264px;width:2px;height:28px;background:#CFCFCF"></div><svg style="position:absolute;left:1127px;top:1266px" width="31" height="25" viewBox="0 0 31 25"><defs><linearGradient id="gxl" x1="0" y1="0" x2="1" y2="1"><stop offset="0" stop-color="#7CD45A"/><stop offset="1" stop-color="#3C8A28"/></linearGradient></defs><path d="M17.5 0.5 H27 L13.5 24 H2.5 Z" fill="url(#gxl)" stroke="#4A9A34" stroke-width="0.8"/><path d="M0.5 0.5 H11.5 L30.5 24 H19.5 Z" fill="url(#gxl)" stroke="#3E8A2C" stroke-width="0.8"/><path d="M4.5 2.2 H9.5 L24 19.5 H19.5 Z" fill="#C6F49E" opacity="0.75"/></svg><svg style="position:absolute;left:1171px;top:1265px" width="28" height="26" viewBox="0 0 28 26"><path d="M0.8 1 H4.6 V17.5 H9.5 L0.8 25 Z" fill="#7FC96C"/><rect x="8" y="1.9" width="14" height="5.6" fill="#fff" stroke="#62A0F2" stroke-width="2"/><rect x="8" y="8.4" width="18" height="5.6" fill="#fff" stroke="#62A0F2" stroke-width="2"/></svg><div style="position:absolute;left:1560px;width:800px;text-align:right;top:1267px;font-size:22px;line-height:22px;color:#333;white-space:nowrap;">Displaying 1 - 22 of 22</div><div style="position:absolute;left:20px;top:1410px;width:600px;height:44px;background:rgba(76,138,186,0.74)"></div><div style="position:absolute;left:26px;top:1421px;font-size:24px;line-height:24px;color:#fff;white-space:nowrap;letter-spacing:-0.2px">Connected in 1255 ms</div><svg style="position:absolute;left:596px;top:1416px" width="16" height="16" viewBox="0 0 16 16"><path d="M2 2 L14 14 M14 2 L2 14" stroke="#fff" stroke-width="4"/></svg><svg style="position:absolute;left:1828px;top:989px" width="27" height="42" viewBox="0 0 27 42"><path d="M1.2 1 V34.4 L9 27.3 L14.2 38.6 L18.8 36.5 L14.7 25.4 H25.6 Z" fill="#fff" stroke="#000" stroke-width="1.4" stroke-linejoin="miter"/></svg>
</body></html>
